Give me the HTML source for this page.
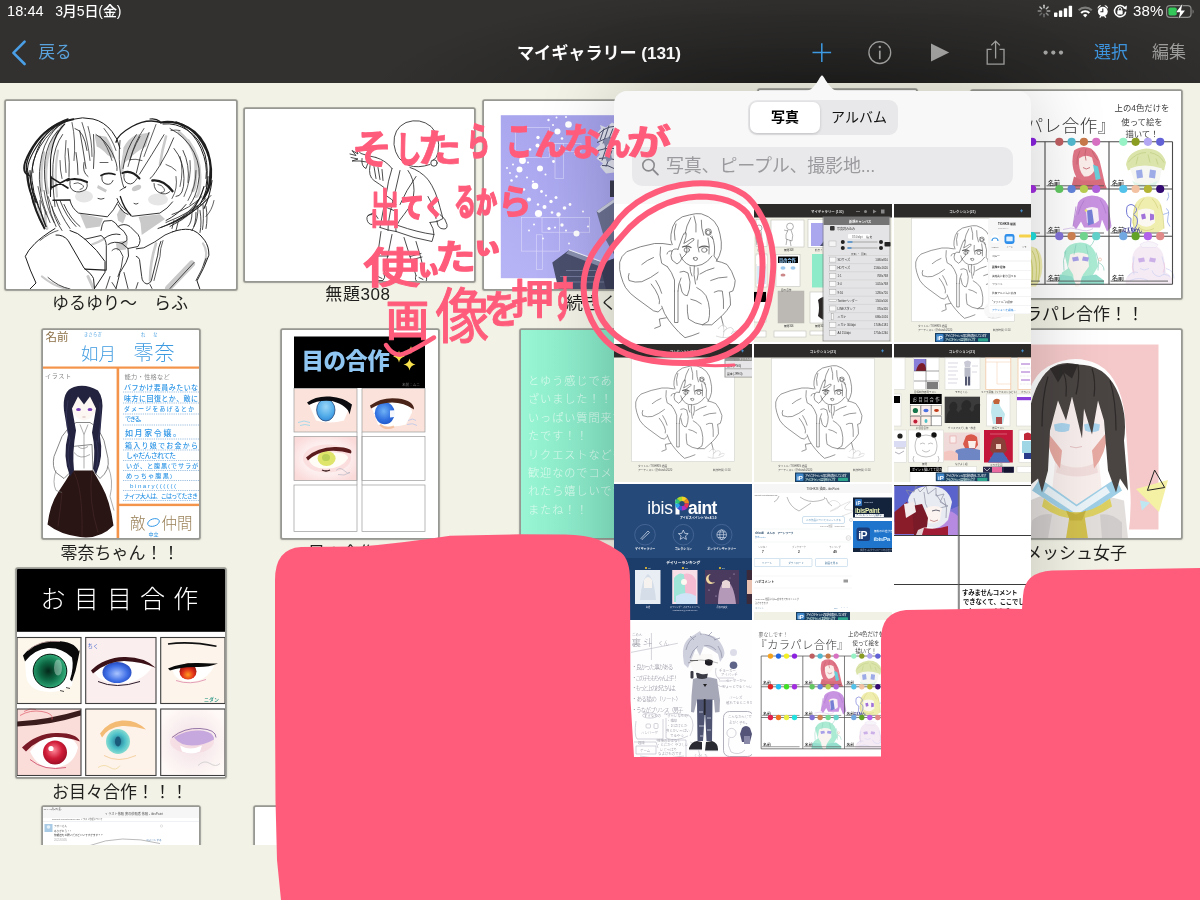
<!DOCTYPE html>
<html lang="ja">
<head>
<meta charset="utf-8">
<title>マイギャラリー (131)</title>
<style>
html,body{margin:0;padding:0}
body{width:1200px;height:900px;overflow:hidden;background:#f2f2e6;position:relative;
  font-family:"Liberation Sans","Noto Sans CJK JP",sans-serif;color:#1d1d1b;-webkit-font-smoothing:antialiased}
svg{display:block;overflow:hidden}
svg text{font-family:"Liberation Sans","Noto Sans CJK JP",sans-serif}
.abs{position:absolute}
.topbar,.gallery,.popover,.ink{will-change:transform}
/* ---------- top bar ---------- */
.topbar{position:absolute;left:0;top:0;width:1200px;height:83px;background:radial-gradient(ellipse 460px 120px at 822px 104px,rgba(0,0,0,.46),rgba(0,0,0,.22) 50%,rgba(0,0,0,0) 100%),#323130;z-index:5}
.status-left{position:absolute;left:7px;top:1px;height:20px;line-height:20px;font-size:14.500px;color:#fff;white-space:pre;letter-spacing:.1px;font-weight:500}
.status-left .d{font-size:14px;letter-spacing:-.1px;margin-left:-1px}
.status-right{position:absolute;right:0;top:0;width:170px;height:24px}
.status-right .pct{position:absolute;left:103px;top:1px;font-size:15px;line-height:20px;color:#fff;letter-spacing:.2px}
.nav{position:absolute;left:0;top:24px;width:1200px;height:59px}
.nav .back{position:absolute;left:38.500px;top:18px;font-size:16.600px;line-height:22px;color:#5aa2dc}
.nav .title{position:absolute;left:0;width:1198px;top:17px;text-align:center;font-size:17.200px;line-height:24px;font-weight:700;color:#fff;letter-spacing:-.1px}
.nav .sel{position:absolute;left:1094px;top:18px;font-size:17px;line-height:22px;color:#3d93dc}
.nav .edit{position:absolute;left:1152px;top:18px;font-size:17px;line-height:22px;color:#9b9b99}
.nav svg{position:absolute;left:0;top:0}
/* ---------- gallery ---------- */
.gallery{position:absolute;left:0;top:83px;width:1200px;height:762px;overflow:hidden;z-index:1}
.thumb{position:absolute;background:#fff;border-radius:.8px;box-shadow:0 0 0 1.700px #989892,0 .5px 1.600px 1.300px rgba(90,90,80,.32);overflow:hidden}
.thumb svg{position:absolute;left:0;top:0}
.label{position:absolute;width:238px;text-align:center;font-size:17px;line-height:22px;color:#1f1f1d;white-space:pre}
/* ---------- popover ---------- */
.popover{position:absolute;left:614px;top:91px;width:417px;height:700px;background:#f8f8f8;border-radius:13px 13px 0 0;z-index:6;
  box-shadow:0 0 80px rgba(0,0,0,.2)}
.popover .arrow{position:absolute;left:186px;top:-16px}
.seg{position:absolute;left:134px;top:9px;width:150px;height:35px;border-radius:9px;background:#e8e8ea}
.seg .on{position:absolute;left:2px;top:2px;width:70px;height:31px;border-radius:7px;background:#fff;box-shadow:0 1px 3px rgba(0,0,0,.18);
  text-align:center;font-size:14px;line-height:31px;font-weight:700;color:#000}
.seg .off{position:absolute;left:74px;top:2px;width:74px;height:31px;text-align:center;font-size:14px;line-height:31px;color:#111}
.search{position:absolute;left:18px;top:56px;width:381px;height:39px;border-radius:10px;background:#e9e9eb}
.search span{position:absolute;left:34px;top:0;font-size:18px;line-height:39px;color:#9b9b9f;white-space:nowrap;font-weight:400;letter-spacing:-.2px}
.search svg{position:absolute;left:8px;top:10px}
.grid{position:absolute;left:0;top:113px;width:417px;height:560px;overflow:hidden;background:#fff}
.cell{position:absolute;width:138px;height:138px;overflow:hidden;background:#f2f2e6}
.cell svg{position:absolute;left:0;top:0}
.cell.r3 svg{top:-1px}
/* ---------- ink overlay ---------- */
.ink{position:absolute;left:0;top:0;z-index:9}
</style>
</head>
<body>
<header class="topbar">
  <div class="status-left">18:44   <span class="d">3月5日(金)</span></div>
  <div class="status-right">
    <svg width="170" height="24" viewBox="1030 0 170 24">
      <!-- activity spinner -->
      <g stroke-width="1.4" stroke-linecap="round" fill="none">
        <path d="M1044 5.2v2.6" stroke="#d8d8d8"/><path d="M1048.1 6.9l-1.8 1.8" stroke="#bdbdbd"/>
        <path d="M1049.8 11h-2.6" stroke="#a5a5a5"/><path d="M1048.1 15.1l-1.8-1.8" stroke="#8d8d8d"/>
        <path d="M1044 16.8v-2.6" stroke="#777"/><path d="M1039.9 15.1l1.8-1.8" stroke="#6a6a6a"/>
        <path d="M1038.2 11h2.6" stroke="#8f8f8f"/><path d="M1039.9 6.9l1.8 1.8" stroke="#c4c4c4"/>
      </g>
      <!-- signal -->
      <g fill="#fff"><rect x="1054" y="12.6" width="3.4" height="4.4" rx=".7"/><rect x="1058.9" y="10.4" width="3.4" height="6.6" rx=".7"/>
      <rect x="1063.8" y="8.2" width="3.4" height="8.8" rx=".7"/><rect x="1068.7" y="5.8" width="3.4" height="11.2" rx=".7"/></g>
      <!-- wifi -->
      <g fill="none" stroke="#fff" stroke-linecap="butt">
        <path d="M1078.6 10.3a9.4 9.4 0 0 1 13.2 0" stroke-width="2.1" stroke="#7d7d7b"/>
        <path d="M1081.1 12.9a5.8 5.8 0 0 1 8.2 0" stroke-width="2.1"/>
      </g>
      <path d="M1085.2 17.4l-2.2-2.3a3.1 3.1 0 0 1 4.4 0z" fill="#fff"/>
      <!-- alarm -->
      <g fill="#fff"><circle cx="1102.8" cy="11.6" r="4.9"/><path d="M1097.6 8.8a3 3 0 0 1 3.6-3.4zM1108 8.8a3 3 0 0 0-3.6-3.4z"/>
      <path d="M1099.2 17.3l1.4-1.8 1 .8-1.4 1.8zM1106.4 17.3l-1.4-1.8-1 .8 1.4 1.8z"/></g>
      <path d="M1102.8 8.6v3.2h-2.4" stroke="#2c2b2a" stroke-width="1.1" fill="none"/>
      <!-- rotation lock -->
      <g fill="none" stroke="#fff" stroke-width="1.5"><path d="M1124.9 8.2a5.6 5.6 0 1 0 .8 3.4"/></g>
      <path d="M1126.9 5.6l-.4 4.2-3.7-1.9z" fill="#fff"/>
      <rect x="1117.3" y="10.2" width="5.4" height="4.3" rx=".9" fill="#fff"/>
      <path d="M1118.4 10.4v-1.2a1.6 1.6 0 0 1 3.2 0v1.2" stroke="#fff" stroke-width="1" fill="none"/>
      <!-- battery -->
      <rect x="1166.6" y="5.6" width="24.4" height="11.8" rx="3.4" fill="none" stroke="#8c8c8a" stroke-width="1.2"/>
      <path d="M1192.6 9.4c1.3.4 1.3 3.8 0 4.2z" fill="#8c8c8a"/>
      <rect x="1168.4" y="7.4" width="8.4" height="8.2" rx="1.8" fill="#34c759"/>
      <path d="M1182.3 4l-6.2 8.2h4l-1.4 6.6 6.3-8.4h-4z" fill="#fff" stroke="#2c2b2a" stroke-width=".9" paint-order="stroke"/>
    </svg>
    <span class="pct">38%</span>
  </div>
  <nav class="nav">
    <svg width="1200" height="59" viewBox="0 24 1200 59">
      <path d="M24.6 41.6L13.4 52.8l11.2 11.2" fill="none" stroke="#4a9fe6" stroke-width="2.6" stroke-linecap="round" stroke-linejoin="round"/>
      <path d="M812.5 52.6h18.6M821.8 43.3v18.6" stroke="#3f9feb" stroke-width="1.5" fill="none"/>
      <circle cx="879.8" cy="52.6" r="10.9" fill="none" stroke="#a3a3a1" stroke-width="1.3"/>
      <path d="M879.8 50.6v8.6" stroke="#a3a3a1" stroke-width="1.7"/><circle cx="879.8" cy="47" r="1.2" fill="#a3a3a1"/>
      <path d="M931 43.6v18l18.2-9z" fill="#a3a3a1"/>
      <path d="M991.6 49.4h-4.4v14.8h16.8v-14.8h-4.4" fill="none" stroke="#a3a3a1" stroke-width="1.3"/>
      <path d="M995.6 58.6V41.4M991.3 45.4l4.3-4.3 4.3 4.3" fill="none" stroke="#a3a3a1" stroke-width="1.3"/>
      <circle cx="1045.6" cy="52.6" r="2.1" fill="#a3a3a1"/><circle cx="1053.3" cy="52.6" r="2.1" fill="#a3a3a1"/><circle cx="1061" cy="52.6" r="2.1" fill="#a3a3a1"/>
    </svg>
    <div class="back">戻る</div>
    <div class="title">マイギャラリー (131)</div>
    <div class="sel">選択</div>
    <div class="edit">編集</div>
  </nav>
</header>
<main class="gallery">
  <!-- coordinates inside .gallery are page-y minus 83 -->
  <div class="thumb" style="left:6px;top:17.5px;width:230px;height:188px"><svg width="230" height="188" viewBox="6 100.500 230 188">
<g fill="#c9c9c9" stroke="none">
  <path d="M94.600 134.200L106.300 136.300Q113 146 115 158.700L107.400 154.500Q102 148 96.700 146z"/>
  <path d="M123.500 147Q128 138 136.300 134.200L150.200 132 146 146Q136 151 128.900 158.700L121.400 165z"/>
  <path d="M79.700 213L103 218 100 226 86 228z"/>
  <path d="M138.500 216.300L159.800 213.700 165 218.500 141.700 234.500 140.600 222.700z"/>
  <path d="M98 184.500l9 5-1.500 2.500-8.500-4.500z"/>
  <ellipse cx="136.500" cy="187.500" rx="5" ry="2.600" transform="rotate(-25 136.500 187.500)"/>
  <path d="M117 214l4-8 5 9-3 8-5-3z"/>
  <path d="M116 243q6-4 12-2l-2 8-9 1z"/>
</g>
<g fill="none" stroke="#cacaca" stroke-linecap="round">
  <path d="M179 132Q196 146 196 166T193 190" stroke-width="3.400"/>
  <path d="M166 136Q162 150 160 164" stroke-width="2.600"/>
  <path d="M44 152Q40 170 42 190" stroke-width="2.600"/>
  <path d="M191.800 263.300L168.300 287.800" stroke-width="6.500"/>
  <path d="M203 243Q209 252 204 264" stroke-width="2.200"/>
  <path d="M156 243Q150 262 150 280" stroke-width="2.600"/>
  <path d="M42 276Q54 286 66 288" stroke-width="2.200"/>
  <path d="M92 244Q98 242 103 239" stroke-width="2.200"/>
  <path d="M88 276L93 287" stroke-width="3"/>
  <path d="M46 212Q44 222 47 228" stroke-width="3"/>
</g>
<g fill="none" stroke="#cdcdcd" stroke-linecap="round">
  <path d="M62 126Q50 140 47 160T48 192" stroke-width="3"/>
  <path d="M58 150Q54 170 57 196" stroke-width="2.200"/>
  <path d="M188 140Q200 156 200 176T196 196" stroke-width="3"/>
  <path d="M126 150Q122 160 122 172" stroke-width="3"/>
  <path d="M196 206Q188 216 176 222" stroke-width="2.600"/>
  <path d="M38 206Q40 218 46 226" stroke-width="2.400"/>
</g>
<g fill="#e4e4e4" stroke="none" opacity=".9">
  <ellipse cx="84" cy="196" rx="9" ry="6"/><ellipse cx="158" cy="199" rx="10" ry="6"/>
</g>
<g fill="none" stroke="#1e1e1e" stroke-linecap="round" stroke-linejoin="round">
  <!-- left girl hair outline -->
  <path d="M73.300 118.700Q47 124 33 146T27 174Q28 186 31.700 195Q34 208 44.500 228" stroke-width="1.900"/>
  <path d="M70 119.500Q49 126 36 147T30 176Q31 190 36 202" stroke-width="1.100"/>
  <path d="M66 121Q50 129 40 146T33 172" stroke-width=".9"/>
  <path d="M73.300 118.700Q82 116 93 118.500T112 131Q118 138 120 148" stroke-width="1"/>
  <path d="M64.700 123.500Q52 136 50.500 160V196" stroke-width="1.100"/>
  <path d="M62.600 134Q54 146 53 164T55 206" stroke-width=".8"/>
  <path d="M58 130Q47 142 45 160T48 200Q50 214 56 226" stroke-width=".8"/>
  <path d="M79.700 130Q83 148 86 168M93.500 134Q95 152 93.500 168M75 128Q84 130 87 150M68 148Q70 162 69 176M76 152Q78 164 78 174M84 162Q82 172 88 176" stroke-width=".8"/>
  <path d="M96 134Q106 140 112 152T117 170" stroke-width=".8"/>
  <path d="M100 162H108" stroke-width=".7"/>
  <!-- hair clip -->
  <path d="M50.900 176.900L67.900 187.500M50.900 187.500L69 178M50.900 176V188.500" stroke-width="1.700"/>
  <path d="M53 199.800L70 199.500" stroke-width="1.400"/>
  <!-- left girl eyes -->
  <path d="M67 180Q76 176.500 87 181.500" stroke-width="2"/>
  <path d="M70 181Q69 188 74 190.500T86 189Q88 186 87 182" stroke-width=".8"/>
  <path d="M74 183Q78 181 82 184T80 189" stroke-width=".7"/>
  <path d="M101 175Q107 171.500 115 174" stroke-width="1.700"/>
  <path d="M102 176Q101 182 106 183.500T113 180" stroke-width=".8"/>
  <path d="M98 198Q101 199.500 104 198" stroke-width=".8"/>
  <!-- left girl jaw -->
  <path d="M70 200Q72 208 78.600 212.600L107.400 216.300Q114 210 118 201.400" stroke-width=".9"/>
  <!-- lower hair left -->
  <path d="M56 200Q60 214 70 228M60 200Q66 216 76 226M64 204Q70 218 80 226M52 206Q54 218 62 230M40 200Q40 214 46 226M34 198Q36 212 42 224" stroke-width=".8"/>
  <!-- left shoulder / sleeve -->
  <path d="M55 228Q42 236 34.900 243T25.300 255.800Q30 270 36 282.500L29.500 289" stroke-width="1"/>
  <path d="M40 240Q50 232 58 230" stroke-width=".7"/>
  <path d="M56 234.500Q63 234 68 239.800L84 267.500Q92 274 93.500 278L94.600 289" stroke-width="1"/>
  <path d="M70 230Q78 232 85 238.700Q98 250 105 261V271.800L94.600 287.800" stroke-width="1"/>
  <path d="M85 238.700L101 235Q106 238 106.300 245V269.700" stroke-width=".9"/>
  <path d="M85 268.600L105.300 269.700" stroke-width="1.200"/>
  <path d="M48 277Q58 286 70 288.500" stroke-width=".8"/>
  <!-- hands -->
  <path d="M101 230Q102 223 104 220.600L111.700 220Q116 222 118 226L124 231Q128 236 127 240L122 243" stroke-width=".9"/>
  <path d="M104 238Q112 232 120 234M108 244Q114 240 122 243L128 248Q130 256 126 262L120 272Q118 280 116 288" stroke-width=".9"/>
  <path d="M112 250Q116 246 120 250L123 256Q122 268 118 276" stroke-width=".8"/>
  <path d="M118 226Q124 222 130 226L138 234Q142 240 138 246L128 248" stroke-width=".9"/>
  <path d="M110 276L106 288M124 272L128 288M112 282L116 288" stroke-width=".8"/>
  <!-- right girl hair outline -->
  <path d="M160.900 122Q147 117.500 132 126T116 141.700" stroke-width="1.400"/>
  <path d="M160.900 122Q174 119.500 188 127T208 152Q213 168 210 184.300Q208 192 203.500 198" stroke-width="2.100"/>
  <path d="M163 123.500Q176 122 188 130T205 154Q209 170 206 186" stroke-width="1"/>
  <path d="M150 118.500Q156 117.500 160 121" stroke-width="1.200"/>
  <path d="M164 134.200Q152 154 139.500 173.700M173.700 137.400Q168 152 159.800 165T150.200 178M149 132Q140 152 136.300 172.600M136.300 134.200Q126 148 123 168" stroke-width=".8"/>
  <path d="M171 130Q176 129 180 130M166 164Q172 166 176 170M130 159Q136 158 142 160" stroke-width=".7"/>
  <path d="M174 148Q184 160 184 178T176 196M183 150Q190 164 188 182" stroke-width=".8"/>
  <path d="M120 140Q118 160 121 176T126 186L120 190" stroke-width=".8"/>
  <!-- right girl eyes -->
  <path d="M122.500 172.600Q131 168.500 139.500 178" stroke-width="2"/>
  <path d="M124 174Q123 181 128 183T137 178" stroke-width=".8"/>
  <path d="M152.300 180Q163 178.500 172.600 190.700" stroke-width="2.300"/>
  <path d="M154 183Q154 190 160 192.500T170 191" stroke-width=".8"/>
  <path d="M158 184Q162 184 164 188T161 192" stroke-width=".7"/>
  <path d="M134 203Q136 204.500 138 203" stroke-width=".8"/>
  <!-- jaws -->
  <path d="M120.300 196Q124 208 131 215" stroke-width="1.300"/>
  <path d="M132 215.800L159.800 212.600Q168 208 172.600 201.400" stroke-width=".9"/>
  <path d="M117 198Q120 206 126 210M118 204Q122 212 128 214" stroke-width=".9"/>
  <!-- lower right hair -->
  <path d="M211 195Q196 214 160.900 227M206 198Q192 212 166 222M202 196Q190 208 172 214M198 200Q188 214 176 220M203 204Q204 220 202.500 229M198 206Q198 220 194 226M192 212Q192 222 188 226M174 220L172 228M178 222L176 230" stroke-width=".8"/>
  <path d="M214 200Q212 210 206 216" stroke-width=".7"/>
  <!-- right shoulder -->
  <path d="M172.600 231.300Q182 228 189.700 229T204.600 239.800Q209 246 208.900 254.700Q204 268 197 280.300L200 289" stroke-width="1"/>
  <path d="M136.300 248.300L143.800 247.300Q155 242 165 234.500L172.600 231.300" stroke-width=".9"/>
  <path d="M160.900 240.900Q158 247 157.700 254.700L151.300 280.300Q150 283 147 283.500Q142 282 141.700 276L139.500 259Q138 256 136.300 255.800" stroke-width=".9"/>
  <path d="M163 240Q160 248 160 256L154 280" stroke-width=".7"/>
  <path d="M194 262L170 288M206 258Q202 270 196 280" stroke-width=".8"/>
  <path d="M138 282L136 288M150 284L152 288" stroke-width=".8"/>
</g>
<g fill="none" stroke="#1e1e1e" stroke-linecap="round" stroke-linejoin="round">
  <path d="M68 118.500Q46 126 34 146T28.500 175" stroke-width="1.400"/>
  <path d="M64 120Q44 130 37 150T32 180Q33 192 38 204" stroke-width="1"/>
  <path d="M60 124Q46 136 42 154T40 186Q42 204 50 222" stroke-width=".8"/>
  <path d="M30 170Q30 186 36 200T46 226M28 176Q30 192 34 204" stroke-width="1.200"/>
  <path d="M44 190Q46 206 54 222M48 196Q52 210 60 224M38 186Q40 200 46 214" stroke-width=".7"/>
  <path d="M72 122Q76 140 74 160M82 122Q88 140 90 160M88 126Q92 140 92 156M66 140Q64 156 66 172M60 160Q60 170 62 178" stroke-width=".7"/>
  <path d="M104 128Q112 138 116 150M100 136Q108 146 112 160" stroke-width=".7"/>
  <path d="M176 121.500Q192 126 202 142T210 172Q210 186 205 196" stroke-width="1.500"/>
  <path d="M180 124Q194 132 201 148T206 178" stroke-width="1"/>
  <path d="M170 128Q186 136 194 152T198 184Q196 196 190 204" stroke-width=".8"/>
  <path d="M208 176Q208 190 200 204M212 180Q210 196 204 208M204 186Q200 200 192 210" stroke-width="1.100"/>
  <path d="M196 170Q196 186 188 200M190 160Q192 178 184 196M180 156Q184 170 180 186M176 176Q178 188 172 198" stroke-width=".7"/>
  <path d="M208 198Q190 218 158 228M200 204Q186 216 168 224M194 210Q182 220 170 226M186 204Q178 214 166 220" stroke-width=".9"/>
  <path d="M144 128Q134 142 130 160M156 124Q150 140 144 156M140 136Q132 150 128 166" stroke-width=".7"/>
  <path d="M200 210Q202 222 200 232M196 212Q196 224 192 230M206 206Q208 218 206 228" stroke-width=".8"/>
</g>
</svg></div>
  <div class="label" style="left:1px;top:210px">ゆるゆり〜　らふ</div>

  <div class="thumb" style="left:245px;top:25.5px;width:229px;height:172px"><svg width="229" height="172" viewBox="245 108.500 229 172">
<g fill="none" stroke="#2a2a2a" stroke-width=".85" stroke-linecap="round" stroke-linejoin="round">
  <path d="M409 165Q396 160 394 144Q393 128 406 122Q420 117 431 126Q441 136 438 152Q437 158 433 160"/>
  <circle cx="434" cy="162.500" r="3.200"/>
  <path d="M409 165Q418 168 430 164"/>
  <!-- left arm + hand -->
  <path d="M350 153.500L356 155 352 150 358 153.500 356 148.500 361 153Q366 155 376 157M351 157L358 158.500 352 160.500H360Q368 161 374 164"/>
  <path d="M362 158Q361 166 366 168Q369 163 367 158"/>
  <path d="M376 157Q386 160 392 168M370 165Q368 176 374 180T384 187M374 166L376 178M378 167L380 179M382 169L383 180"/>
  <!-- coat -->
  <path d="M410 167Q420 170 428 179Q436 190 440 207L443 218Q438 222 430 222"/>
  <path d="M392 168Q388 180 386 195L380 227M400 170Q396 188 392 204T388 230M408 170Q414 178 414 190T404 214 396 231"/>
  <path d="M416 176Q406 190 400 204"/>
  <path d="M396 231Q414 238 432 241L434 234Q418 232 398 225"/>
  <path d="M380 227Q388 230 396 231M430 222Q434 228 434 234M428 196Q434 206 436 218"/>
  <path d="M386 195Q392 198 396 204M384 206L394 210"/>
  <!-- hands -->
  <path d="M440 214Q446 218 447 224T441 228Q437 226 437 220"/>
  <path d="M372 214Q366 214 367 219T372 224M368 215L374 212 378 218"/>
  <!-- legs -->
  <path d="M381 231L378 252 376 271M392 234L388 254 384 273M404 237L410 256 416 275M416 241L421 258 424 271"/>
  <path d="M377 252H389M377 255.500H388.500M410 256L421 253M411 259.500L422 256.500"/>
  <path d="M376 271Q371 276 374 280H383Q386 277 384 273M416 275Q414 280 418 281.500H426Q428 276 424 271M378 276L382 278M419 277L423 279"/>
</g>
</svg></div>
  <div class="label" style="left:239px;top:201px;letter-spacing:.6px">無題308</div>

  <div class="thumb" style="left:484px;top:17.5px;width:229px;height:188px"><svg width="229" height="188" viewBox="484 100.500 229 188">
<defs><linearGradient id="t3g" x1="0" y1="1" x2="1" y2="0"><stop offset="0" stop-color="#b7b4f6"/><stop offset=".5" stop-color="#aaa7ef"/><stop offset="1" stop-color="#9f9ce6"/></linearGradient></defs>
<rect x="500.800" y="114.700" width="196" height="163" fill="url(#t3g)"/>
<g fill="none" stroke="#e3e2fb" stroke-width=".6" opacity=".85">
  <rect x="515.600" y="127" width="34" height="29.800"/><rect x="555" y="143" width="8.700" height="35"/>
  <rect x="521.400" y="217" width="37.900" height="33.600"/><rect x="542" y="217" width="47.700" height="14.700"/>
  <rect x="536.600" y="234.300" width="6.100" height="34.700"/><rect x="549" y="143" width="32" height="8"/>
</g>
<g fill="#fff">
  <circle cx="568.500" cy="124" r="3.300"/><circle cx="557.500" cy="131" r="3"/><circle cx="548.500" cy="119.500" r="1.200"/><circle cx="556.500" cy="117" r="1"/>
  <circle cx="566" cy="116.500" r="1"/><circle cx="538" cy="137" r="1.700"/><circle cx="537.500" cy="145" r="2"/><circle cx="530" cy="149" r="1.300"/>
  <circle cx="522.500" cy="160" r="3.400"/><circle cx="540" cy="168" r="3"/><circle cx="519.500" cy="169" r="3"/><circle cx="528" cy="162" r="1"/>
  <circle cx="513" cy="164" r="1"/><circle cx="507" cy="167.500" r="1"/><circle cx="510" cy="172.500" r=".9"/><circle cx="516.500" cy="176" r="1.200"/>
  <circle cx="511.500" cy="180" r="1.300"/><circle cx="527" cy="177" r="1"/><circle cx="533" cy="181" r="1.100"/><circle cx="535" cy="185.500" r="3.300"/>
  <circle cx="524" cy="189" r="1.200"/><circle cx="515" cy="190" r="1"/><circle cx="541.500" cy="191" r="1.400"/><circle cx="546" cy="195" r="1"/>
  <circle cx="529" cy="199" r="2"/><circle cx="538" cy="204" r="1.200"/><circle cx="544.500" cy="206.500" r="2"/><circle cx="551" cy="201" r="1.700"/>
  <circle cx="556" cy="197" r="1.500"/><circle cx="538.500" cy="213" r="3.600"/><circle cx="552" cy="212" r="1.300"/><circle cx="558.500" cy="214" r="2.200"/>
  <circle cx="564.500" cy="207.500" r="1.800"/><circle cx="570" cy="204" r="1.400"/><circle cx="583" cy="211" r="1"/><circle cx="562" cy="224.500" r="1.700"/>
  <circle cx="549" cy="228" r="1.600"/><circle cx="555" cy="227" r="1"/><circle cx="534" cy="224" r="1"/><circle cx="529" cy="230" r=".9"/>
  <circle cx="566" cy="230" r="1"/><circle cx="576.500" cy="233" r="3"/><circle cx="588" cy="226" r="1"/><circle cx="569" cy="243" r=".9"/>
  <circle cx="543" cy="238" r=".9"/><circle cx="553" cy="124.500" r="1"/><circle cx="562" cy="138" r="1.300"/><circle cx="573" cy="142" r="1.200"/>
  <circle cx="575.500" cy="153" r="1.300"/><circle cx="553.500" cy="161" r="1.400"/><circle cx="545.500" cy="174" r="1"/><circle cx="560" cy="148" r="1"/>
</g>
<!-- character -->
<path d="M596.500 210.700L614 198.400V254L603.700 235.400z" fill="#6b7192"/>
<path d="M596.500 210.700L614 198.400V202L599 212.500z" fill="#c9cde0"/>
<path d="M610 180h6v16.500h-6z" fill="#3a3c50"/>
<path d="M552.300 262L568.800 249.800 601.700 262 618 257V289H558.500z" fill="#4a4f6c"/>
<path d="M568.800 249.800L601.700 262 614 258.500V262L600 266 566 253z" fill="#8890ae"/>
<path d="M568.800 249.300L601.700 261.300" stroke="#eef0f8" stroke-width="1.200" fill="none"/>
<path d="M560 276h40M562 281.500h46M566 270h30" stroke="#767d9e" stroke-width=".9" fill="none"/>
<path d="M600 264l6 25h10v-32z" fill="#3a3e58"/>
<g>
  <path d="M596 134L601 128 600 124.500 606 127 612 122 614 123V172L606 173 600 166 603 163 596.500 158 600 154 595.500 148 600 144z" fill="#dfe1ee"/>
  <path d="M598 134q8-8 16-8M597 142q8-5 17-5M598 150q8-3 16-2M599 158q8-2 15 1M602 165q6-1 12 3M604 128l-4 12M609 125l-6 18M613 128l-8 20M606 148l-4 12M612 150l-6 16" stroke="#4e526e" stroke-width="1" fill="none"/>
  <path d="M603 140l6-4 2 6-6 4zM605 156l6-3 1 6-5 3z" fill="#8d92b4"/>
</g>
</svg></div>
  <div class="label" style="left:566px;top:210px;width:auto;text-align:left">続きく</div>

  <div class="thumb" style="left:759px;top:6.800px;width:157px;height:208px"></div>
  <div class="thumb" style="left:972px;top:7.500px;width:209px;height:207px"><svg width="209" height="207" viewBox="972 90.500 209 207">
<rect x="970" y="89" width="212" height="212" fill="#fff"/>
<text x="977" y="111" font-size="7.500" fill="#333" font-weight="300">裏なしです！</text>
<text x="972" y="131" font-size="17.500" fill="#3a3a3a" font-weight="300" letter-spacing=".5">『カラパレ合作』</text>
<g font-size="8.400" fill="#3a3a3a" font-weight="400" text-anchor="middle"><text x="1142" y="110.500">上の4色だけを</text><text x="1142" y="124.500">使って絵を</text><text x="1142" y="136">描いて！</text></g>
<g opacity=".8"><path d="M1074 150q8-6 17-2 8 6 10 18l5 22h-34l4-12q-6-12-2-26z" fill="#d9546a"/><path d="M1079 158q6-5 13-1l3 12q-4 8-11 7-6-6-5-18z" fill="#fbe9e4"/><path d="M1093 164l5 2 3 14-5 1z" fill="#45c3cf"/><path d="M1074 176l8 4h12l8-2 5 10h-36z" fill="#cf4a5c"/><path d="M1080 150q-4 8-3 14M1086 148q-2 6 0 12M1092 150q2 6 6 10M1083 167q3 3 7 0" stroke="#b23a4a" stroke-width=".8" fill="none"/></g>
<g opacity=".75"><path d="M1126 164q2-14 20-16 16 0 20 14l-2 8q-18-8-36 0z" fill="#cfdc8e"/><path d="M1130 168q14-6 32 0l-3 14q-12 8-24 0z" fill="#f3f5ee"/><path d="M1136 170l6-1 1 8-6 1zM1150 169l6 1-1 8-6-1z" fill="#7d8fe0"/><path d="M1132 180q12 8 26 0l-4 8h-18z" fill="#d6f2e3"/><path d="M1128 162q8-10 18-10M1150 152q10 2 14 10M1138 156l-2 8M1148 154l2 8M1156 158l2 6" stroke="#a9bd5a" stroke-width=".7" fill="none"/></g>
<g opacity=".75"><path d="M1078 202q4-6 14-7 12 0 16 10l3 22-4 4-5-12-2 8h-16l-3-6-5 8-3-4z" fill="#b66fd6"/><path d="M1086 208q6-3 12 0l1 12q-6 6-12 2z" fill="#f6ecf4"/><path d="M1087 210l5-1 2 14-6 2z" fill="#4a55c8"/><path d="M1076 206l-3 20M1108 206l3 20M1084 200q-4 6-6 14M1100 199q4 6 6 14" stroke="#9550bf" stroke-width=".8" fill="none"/><path d="M1063 229q8-3 16 0t14-1" stroke="#c9a8e2" stroke-width=".8" fill="none"/><circle cx="1086" cy="210" r="1.300" fill="#e8e04a"/></g>
<g opacity=".8"><path d="M1134 206q4-10 14-10 12 0 14 12l2 20-6 4h-22l-4-10z" fill="#ecea9c"/><path d="M1138 210q8-4 16 0l1 12q-8 8-17 1z" fill="#fbf6ee"/><path d="M1141 214l4-1 1 5-4 1zM1150 213l4 1v5l-4 1z" fill="#8a4fd0"/><path d="M1127 206q4-4 8 0t-2 8q6 2 4 10l-4 8q-4-6-2-14-6-2-4-12z" fill="none" stroke="#4f57c9" stroke-width="1"/><path d="M1136 204q-4 10-2 24M1160 204q4 10 4 24M1144 198q-4 4-6 10M1152 198q4 4 6 10M1140 228q6 4 14 0" stroke="#c9c45a" stroke-width=".7" fill="none"/><path d="M1167 200q3-4 1-8M1166 208q4 2 2 8t2 10M1163 214l6-2" stroke="#6a86d8" stroke-width=".7" fill="none"/></g>
<g opacity=".75"><path d="M1064 252q4-10 16-10 12 0 16 12l2 12-6 10 10 6v-2H1060l2-8 6-4z" fill="#8fe5c5"/><path d="M1070 254q8-4 18 0l1 12-6 8-4 12h-4l-2-12-5-8z" fill="#f7f1ec"/><path d="M1072 257l6-1 1 4-6 1zM1083 256l6 1-1 4-6-1z" fill="#8a7fe0"/><path d="M1060 274l12 2 4 8h-18zM1082 276l14-2 8 6v4h-24z" fill="#6fd4bd"/><path d="M1066 250q-4 10-2 20M1096 252q4 8 2 18M1076 244l-2 10M1086 244l2 10M1090 246q6-6 4-12M1098 262q6 2 6 8" stroke="#5fbfa6" stroke-width=".7" fill="none"/><circle cx="1100" cy="259" r="1.500" fill="none" stroke="#e69a7a" stroke-width=".6"/></g>
<g opacity=".9"><path d="M1132 258q2-14 16-14 14 0 16 14l2 14q8 4 6 12h-46q-2-8 6-12z" fill="#f4e9f4"/><path d="M1140 244q8-6 18 0l-2 3h-14z" fill="#f7f4fa" stroke="#e7d9ee" stroke-width=".6"/><path d="M1138 258l6-1 1 4-6 1zM1150 257l6 1-1 4-6-1z" fill="#c6a8e6"/><path d="M1134 256q-2 10 0 18M1162 256q4 10 2 18M1128 276q4-6 10-4M1166 268q8 2 8 10M1160 276q4-4 10 0M1130 280q10-4 18 0M1152 270q2 6 8 6M1140 268q4 3 9 0" stroke="#c9cdf0" stroke-width=".7" fill="none"/><path d="M1133 262q-2 6 1 10M1164 262q2 6-1 10" stroke="#f0c6dc" stroke-width=".8" fill="none"/></g>
<g><path d="M1030 246q10 0 12 14t-6 26h-8z" fill="#f1efb2"/><path d="M1032 250q6 8 4 30M1036 248q6 12 2 34M1030 256q4 10 2 26" stroke="#c8cc5c" stroke-width=".7" fill="none"/></g>
<g stroke="#4a4a4a" stroke-width="1.100" fill="none">
<path d="M981 141.3H1172.5"/>
<path d="M981 188.5H1172.5"/>
<path d="M981 235.7H1172.5"/>
<path d="M981 283.8H1172.5"/>
<path d="M981 141.3V283.8"/>
<path d="M1045 141.3V283.8"/>
<path d="M1109 141.3V283.8"/>
<path d="M1172.5 141.3V283.8"/>
</g>
<g font-size="6" fill="#222" font-weight="500">
<text x="984" y="184.3">名前</text>
<text x="1048" y="184.3">名前</text>
<text x="1112" y="184.3">名前</text>
<text x="984" y="231.5">名前</text>
<text x="1048" y="231.5">名前</text>
<text x="1112" y="231.5">名前</text>
<text x="984" y="279.6">名前</text>
<text x="1048" y="279.6">名前</text>
<text x="1112" y="279.6">名前</text>
</g><g stroke="#555" stroke-width=".9">
<path d="M982.5 185.3H1040"/>
<path d="M1046.5 185.3H1104"/>
<path d="M1110.5 185.3H1168"/>
<path d="M982.5 232.5H1040"/>
<path d="M1046.5 232.5H1104"/>
<path d="M1110.5 232.5H1168"/>
<path d="M982.5 280.6H1040"/>
<path d="M1046.5 280.6H1104"/>
<path d="M1110.5 280.6H1168"/>
</g>
<text x="1112" y="231.500" font-size="5.500" fill="#3a3a8a" font-weight="500" textLength="30">　　　よぴいちゃん</text>
<circle cx="995.3" cy="141.3" r="4.100" fill="#f5a21e"/>
<circle cx="1007.6" cy="141.3" r="4.100" fill="#2468e2"/>
<circle cx="1019.9" cy="141.3" r="4.100" fill="#f2f024"/>
<circle cx="1032.2" cy="141.3" r="4.100" fill="#8a22e0"/>
<circle cx="1059.3" cy="141.3" r="4.100" fill="#c05f62"/>
<circle cx="1071.6" cy="141.3" r="4.100" fill="#52b9cf"/>
<circle cx="1083.9" cy="141.3" r="4.100" fill="#c97a4b"/>
<circle cx="1096.2" cy="141.3" r="4.100" fill="#d871c2"/>
<circle cx="1123.3" cy="141.3" r="4.100" fill="#97f2c6"/>
<circle cx="1135.6" cy="141.3" r="4.100" fill="#8a9c22"/>
<circle cx="1147.9" cy="141.3" r="4.100" fill="#b3a6f2"/>
<circle cx="1160.2" cy="141.3" r="4.100" fill="#6262d6"/>
<circle cx="995.3" cy="188.5" r="4.100" fill="#e22424"/>
<circle cx="1007.6" cy="188.5" r="4.100" fill="#22c0f2"/>
<circle cx="1019.9" cy="188.5" r="4.100" fill="#42e024"/>
<circle cx="1032.2" cy="188.5" r="4.100" fill="#a22ee0"/>
<circle cx="1059.3" cy="188.5" r="4.100" fill="#62c862"/>
<circle cx="1071.6" cy="188.5" r="4.100" fill="#6284da"/>
<circle cx="1083.9" cy="188.5" r="4.100" fill="#b9d052"/>
<circle cx="1096.2" cy="188.5" r="4.100" fill="#b062d8"/>
<circle cx="1123.3" cy="188.5" r="4.100" fill="#52c2ea"/>
<circle cx="1135.6" cy="188.5" r="4.100" fill="#f2c2a2"/>
<circle cx="1147.9" cy="188.5" r="4.100" fill="#b4b434"/>
<circle cx="1160.2" cy="188.5" r="4.100" fill="#320a72"/>
<circle cx="995.3" cy="235.7" r="4.100" fill="#e2224e"/>
<circle cx="1007.6" cy="235.7" r="4.100" fill="#f27222"/>
<circle cx="1019.9" cy="235.7" r="4.100" fill="#e9f042"/>
<circle cx="1032.2" cy="235.7" r="4.100" fill="#22e2e0"/>
<circle cx="1059.3" cy="235.7" r="4.100" fill="#8272d8"/>
<circle cx="1071.6" cy="235.7" r="4.100" fill="#d08252"/>
<circle cx="1083.9" cy="235.7" r="4.100" fill="#72d892"/>
<circle cx="1096.2" cy="235.7" r="4.100" fill="#62d2ca"/>
<circle cx="1123.3" cy="235.7" r="4.100" fill="#72a8e2"/>
<circle cx="1135.6" cy="235.7" r="4.100" fill="#62a224"/>
<circle cx="1147.9" cy="235.7" r="4.100" fill="#b262ea"/>
<circle cx="1160.2" cy="235.7" r="4.100" fill="#e28a8a"/>
</svg></div>
  <div class="label" style="left:957px;top:221px">カラパレ合作！！</div>

  <div class="thumb" style="left:43px;top:246.5px;width:156px;height:208px"><svg width="156" height="208" viewBox="43 329.500 156 208">
<g font-weight="400">
<text x="45.500" y="340.500" font-size="11.500" fill="#8b6f45">名前</text>
<text x="84" y="335.500" font-size="4.200" fill="#3f9be0" letter-spacing=".3">きさらぎ</text>
<text x="141" y="335" font-size="4.200" fill="#3f9be0" letter-spacing="8">れな</text>
<text x="81" y="359" font-size="17.500" fill="#3f9be0" font-weight="300">如月</text>
<text x="133.500" y="359" font-size="20" fill="#3f9be0" font-weight="300" letter-spacing="1">零奈</text>
<text x="45" y="377.500" font-size="6.200" fill="#8a8a8a" letter-spacing=".5">イラスト</text>
<text x="124.500" y="378.500" font-size="6.200" fill="#8a8a8a" letter-spacing=".3">能力・性格など</text>
</g>
<g fill="#f4934a"><rect x="43" y="366" width="156" height="2.200"/><rect x="116.600" y="367" width="2.600" height="171"/><rect x="118" y="503.200" width="81" height="2.400"/></g>
<g font-size="7" fill="#2f96e6" font-weight="500" letter-spacing="-.1">
<text x="124" y="389" textLength="74">バフかけ要員みたいな</text>
<text x="124" y="400.500" textLength="74">味方に回復とか、敵に</text>
<text x="124" y="410" font-size="5.800" textLength="70">ダメージをあげるとか</text>
<text x="125" y="420.500" font-size="6" textLength="20">できる。</text>
<text x="125" y="435" font-size="8" textLength="56">如月家令嬢。</text>
<text x="125" y="447" textLength="73">箱入り娘でお金から</text>
<text x="126" y="457" textLength="50">しゃだんされてた</text>
<text x="126" y="467.500" font-size="6.200" textLength="72">いが、と腹黒(でサラが</text>
<text x="126" y="477" font-size="6.200" textLength="46">めっちゃ腹黒)</text>
<text x="130" y="487" font-size="6.200" textLength="46">binary((((((</text>
<text x="124" y="497" font-size="6" textLength="74">ナイフ大人は、こはってたさき</text>
</g>
<g stroke="#3b7fc0" stroke-width=".5" stroke-dasharray="1.200 1" fill="none">
<path d="M123 391.500h76M123 402.500h76M123 413.500h76M123 424.500h76M123 438.500h76M123 449.500h76M123 460h76M123 470h76M123 480h76M123 490h76M123 500h76"/>
</g>
<g font-weight="300"><text x="130" y="528" font-size="15.500" fill="#9b8259">敵</text><text x="161.500" y="528" font-size="15.500" fill="#9b8259">仲間</text>
<text x="148.500" y="535.500" font-size="5" fill="#2f96e6" font-weight="500">中立</text></g>
<ellipse cx="153.500" cy="522" rx="6" ry="3.600" fill="none" stroke="#2f96e6" stroke-width=".9" transform="rotate(-18 153.500 522)"/>
<!-- character -->
<g>
 <path d="M72 470Q66 480 58 492T47.500 524Q60 534 80 536.500T113.500 525Q110 500 102 486L93 470z" fill="#2a1515"/>
 <path d="M73 470q10 16 9 66M92 470q-4 30 6 62M62 492q-2 20-4 34" stroke="#4a2a2a" stroke-width=".6" fill="none"/>
 <path d="M76 422Q68 426 62 436L54 456Q52 466 56 472L64 478 72 470V446L92 444 93 470 100 478Q110 470 108 458L104 440Q98 426 90 422z" fill="#fff" stroke="#555" stroke-width=".7"/>
 <path d="M56 470q-4 12 0 20l6 2M108 466q6 14 2 30l4 14" stroke="#777" stroke-width=".6" fill="none"/>
 <path d="M80 424l4 10 4-10M84 434v34M78 446q4 4 10 0M74 452q6 8 16 2" stroke="#777" stroke-width=".6" fill="none"/>
 <path d="M72 398q0-8 12-8t12 8v10q-2 10-12 12-10-2-12-12z" fill="#fdf7f4"/>
 <path d="M64 410Q62 390 74 386.500T98 390Q104 398 102 412L100 436Q104 456 96 474L93 468Q96 450 92 432L96 408 90 396 84 404 78 396 72 408 76 430Q72 452 74 470L70 476Q62 456 68 434z" fill="#23233f"/>
 <path d="M68 400q-4 20 2 40M100 402q2 20-2 40M70 440q-4 14 0 28M96 440q4 14 0 28" stroke="#3d3d66" stroke-width=".6" fill="none"/>
 <ellipse cx="78.500" cy="409" rx="2.400" ry="1.500" fill="#7b3fb8"/><ellipse cx="90" cy="409" rx="2.400" ry="1.500" fill="#7b3fb8"/>
 <path d="M82.500 416.500h3" stroke="#a77" stroke-width=".5"/>
</g>
</svg></div>
  <div class="label" style="left:1px;top:460px">零奈ちゃん！！</div>

  <div class="thumb" style="left:282px;top:246.5px;width:156px;height:208px"><svg width="156" height="208" viewBox="282 329.500 156 208">
<defs>
<radialGradient id="t7b1" cx=".5" cy=".35" r=".7"><stop offset="0" stop-color="#9bd6f7"/><stop offset=".6" stop-color="#55aeea"/><stop offset="1" stop-color="#2f86d6"/></radialGradient>
<radialGradient id="t7b2" cx=".45" cy=".4" r=".7"><stop offset="0" stop-color="#6fb2f5"/><stop offset=".6" stop-color="#2f6fe0"/><stop offset="1" stop-color="#1d4fc0"/></radialGradient>
<radialGradient id="t7p" cx=".5" cy=".5" r=".6"><stop offset="0" stop-color="#fff"/><stop offset=".6" stop-color="#fdeeee"/><stop offset="1" stop-color="#fbdada"/></radialGradient>
</defs>
<rect x="294" y="336" width="131" height="51.500" fill="#000"/>
<text x="301.500" y="368.500" font-size="22.500" font-weight="900" fill="#8fc5f1" letter-spacing="-.6">目の合作</text>
<g fill="#f6e04c"><path d="M399 350q.8 5 6 6-5.200 1-6 6-.8-5-6-6 5.200-1 6-6z"/><path d="M409.500 358q.8 5 6 6-5.200 1-6 6-.8-5-6-6 5.200-1 6-6z"/><path d="M411 345.500q.5 3.200 4 4-3.500.8-4 4-.5-3.200-4-4 3.500-.8 4-4z"/></g>
<text x="402" y="385" font-size="3.600" fill="#777">名前：ムニ</text>
<!-- cells -->
<rect x="294" y="388" width="63" height="43.500" fill="#fbe3db"/>
<rect x="362" y="388" width="63" height="43.500" fill="#fbe3db"/>
<rect x="294" y="436" width="63" height="44" fill="url(#t7p)"/>
<g fill="none" stroke="#9a9a9a" stroke-width=".7">
<rect x="294" y="388" width="63" height="43.500"/><rect x="362" y="388" width="63" height="43.500"/>
<rect x="294" y="436" width="63" height="44"/><rect x="362" y="436" width="63" height="44"/>
<rect x="294" y="484.500" width="63" height="46.500"/><rect x="362" y="484.500" width="63" height="46.500"/>
<path d="M357 431.500V484.500M362 431.500V484.500"/>
</g>
<!-- eye 1 -->
<path d="M309 404Q318 398 332 399T350 406L344 420Q330 424 316 420z" fill="#fff"/>
<ellipse cx="325.800" cy="409.500" rx="9.200" ry="11" fill="url(#t7b1)" stroke="#1b3a6a" stroke-width=".7"/>
<path d="M307 402Q316 395 330 396T352 404L349.500 414Q348 405 332 400.500 318 399 309 404.500z" fill="#0b0b0f"/>
<path d="M298 422q6-3 12 0M300 425q5-2 10 0" stroke="#a9d8ea" stroke-width="1" fill="none"/>
<!-- eye 2 -->
<path d="M372 408Q384 400 398 402T412 412L406 424Q392 428 378 424z" fill="#fff"/>
<ellipse cx="384.800" cy="412.800" rx="10" ry="11" fill="url(#t7b2)"/>
<path d="M370 405Q382 396 398 398T414 409Q404 402 392 402 380 402 371 408z" fill="#4a2418"/>
<path d="M390 410l18-1 2 6-20 2z" fill="#fff" opacity=".95"/>
<path d="M380 424q6 6 14 2" stroke="#f0b48a" stroke-width="2" fill="none" opacity=".7"/>
<path d="M408 420q5-3 8 0M407 424q6-2 10 1" stroke="#b9c4e8" stroke-width=".8" fill="none"/>
<!-- eye 3 -->
<ellipse cx="327" cy="458" rx="24" ry="14" fill="#f9cfd0" opacity=".55"/>
<path d="M309 458Q320 452 334 452T348 458Q342 468 326 468T309 458z" fill="#fffdf6"/>
<ellipse cx="326.600" cy="458" rx="9" ry="7.500" fill="#dfe46a"/><ellipse cx="326" cy="457" rx="4" ry="3.500" fill="#b9cf58"/>
<path d="M306 457Q318 446 336 446.500T351 453Q340 449.500 328 450.500 316 452 308 460z" fill="#5a1c1c"/>
<path d="M322 469.500q4 2 8 0" stroke="#3a1a1a" stroke-width="1.300" fill="none"/>
<path d="M336 470q4-4 8 0t6 2M338 474q6 2 12-2" stroke="#b8b8c4" stroke-width=".7" fill="none"/>
</svg></div>
  <div class="label" style="left:308px;top:460px;width:auto;text-align:left">目の合作</div>

  <div class="thumb" style="left:521px;top:246.5px;width:156px;height:208px;background:#8eeccb"><svg width="156" height="208" viewBox="521 329.500 156 208">
<defs><linearGradient id="t8g" x1="0" y1="0" x2="1" y2="0"><stop offset="0" stop-color="#99f5d3"/><stop offset=".6" stop-color="#84e6c5"/><stop offset="1" stop-color="#7cdfbd"/></linearGradient></defs>
<rect x="521" y="329.500" width="156" height="208" fill="url(#t8g)"/>
<g font-size="11.200" fill="#dcfcf0" font-weight="300" letter-spacing=".9">
<text x="528" y="384.500">とゆう感じでありがとうご</text>
<text x="528" y="402.800">ざいました！！</text>
<text x="528" y="421.200">いっぱい質問来て嬉しかっ</text>
<text x="528" y="439.600">たです！！</text>
<text x="528" y="458">リクエストなども</text>
<text x="528" y="476.400">歓迎なのでコメントしてく</text>
<text x="528" y="494.800">れたら嬉しいです</text>
<text x="528" y="513.200">またね！！</text>
</g>
</svg></div>

  <div class="thumb" style="left:972px;top:246.5px;width:209px;height:208px"><svg width="209" height="208" viewBox="972 329.500 209 208">
<rect x="993" y="344" width="165.500" height="185" fill="#f5c9c9"/>
<path d="M1136 488.500L1168 479.500 1159 511.500z" fill="#f5f1a4"/>
<path d="M1140 500l10 2-8 8z" fill="#bfe7f2"/>
<path d="M1154.600 469.600L1147.400 489.900 1164.700 487z" fill="none" stroke="#222" stroke-width="1"/>
<!-- white sticker outline -->
<path d="M1022 440Q1022 380 1048 366T1098 364Q1124 378 1126 430L1130 486Q1132 510 1128 538H1024z" fill="#fff"/>
<!-- body -->
<path d="M1030 500Q1050 490 1076 492T1124 500L1128 538H1026z" fill="#e2dedc"/>
<path d="M1032 520q10-8 20-6l-4 24h-18zM1100 514q12-2 22 8v16h-20z" fill="#d0cccb"/>
<path d="M1056 452h42l4 40-25 16-25-16z" fill="#f8eeec"/><path d="M1058 462q18 10 38 0l2 10q-20 8-42 0z" fill="#f1dedc"/>
<path d="M1040 478L1076.600 504 1115.600 478 1122 490 1078 520 1032 490z" fill="#9fcfe6"/>
<path d="M1048 486L1076.600 506 1106 486 1110 492 1077 514 1044 492z" fill="#e9f3f8"/>
<path d="M1044 498Q1060 512 1076 512T1110 498L1112 506Q1094 518 1076 518T1042 506z" fill="#ddd063"/>
<path d="M1070 512h14l4 26h-22z" fill="#d2c14f"/>
<path d="M1066 510l10 4 10-4-4 10h-12z" fill="#c4b23f"/>
<!-- face -->
<path d="M1046 400Q1052 384 1076 384T1106 402L1104 444Q1094 462 1076 464T1048 444z" fill="#f8eeee"/>
<path d="M1046 430q2 24 14 38l2-18zM1108 430q-2 24-14 38l-2-18z" fill="#e6aaa2"/>
<path d="M1054 424q8-3 16 0l-1 6q-7 3-14 0zM1084 424q8-3 16 0l-1 6q-7 3-14 0z" fill="#a9d3ec"/>
<path d="M1070 446q6 2.500 12 0" stroke="#e0b6b6" stroke-width=".8" fill="none"/>
<!-- hair -->
<path d="M1026 488Q1022 420 1036 388T1078 364Q1104 364 1116 388T1124 440L1128 490 1120 478 1116 492 1108 470 1104 420 1098 400 1092 434 1084 408 1082 438 1072 396 1066 420 1058 400 1050 430 1048 470 1042 492 1038 478z" fill="#4a4543"/>
<path d="M1060 366q8 10 6 30M1078 364q2 14-2 30M1092 368q4 12 2 28M1048 376q-6 20-6 50M1110 380q6 20 6 50" stroke="#2d2a29" stroke-width="1.200" fill="none"/>
<path d="M1050 368q14-6 28-4l-6 14-8-6-6 10z" fill="#2f2c2b"/>
</svg></div>
  <div class="label" style="left:957px;top:460px">メッシュ女子</div>

  <div class="thumb" style="left:17px;top:485.5px;width:208px;height:208px"><svg width="208" height="208" viewBox="17 569.500 208 208">
<defs>
<radialGradient id="e1" cx=".45" cy=".5" r=".6"><stop offset="0" stop-color="#04281a"/><stop offset=".45" stop-color="#0e6a45"/><stop offset="1" stop-color="#3cc08a"/></radialGradient>
<radialGradient id="e2" cx=".5" cy=".55" r=".6"><stop offset="0" stop-color="#a9c4ff"/><stop offset=".6" stop-color="#3f6fe6"/><stop offset="1" stop-color="#1d3fb0"/></radialGradient>
<radialGradient id="e3" cx=".5" cy=".7" r=".7"><stop offset="0" stop-color="#ff9a1e"/><stop offset=".5" stop-color="#e0301a"/><stop offset="1" stop-color="#7a0a0a"/></radialGradient>
<radialGradient id="e4" cx=".45" cy=".4" r=".7"><stop offset="0" stop-color="#ff8a9a"/><stop offset=".5" stop-color="#d01c38"/><stop offset="1" stop-color="#8a0a20"/></radialGradient>
<radialGradient id="e5" cx=".5" cy=".5" r=".6"><stop offset="0" stop-color="#1e6a8a"/><stop offset=".5" stop-color="#4cc0c8"/><stop offset="1" stop-color="#a6ead6"/></radialGradient>
<radialGradient id="e6" cx=".5" cy=".5" r=".6"><stop offset="0" stop-color="#f2dfe6"/><stop offset="1" stop-color="#fffaf7"/></radialGradient>
</defs>
<rect x="17" y="569.500" width="208" height="208" fill="#fff"/>
<rect x="16" y="568" width="210" height="64.300" fill="#000"/>
<text x="40.500" y="608" font-size="25" font-weight="300" fill="#fff" letter-spacing="8.200">お目目合作</text>
<!-- cell backgrounds -->
<rect x="17" y="638" width="64" height="66" fill="#fdf6ea"/><rect x="85.700" y="638" width="70.300" height="66" fill="#fbeeee"/><rect x="160.700" y="638" width="64.300" height="66" fill="#fdf5ec"/>
<rect x="17" y="709.500" width="64" height="66.500" fill="#fadcd8"/><rect x="85.700" y="709.500" width="70.300" height="66.500" fill="#fdf3ea"/><rect x="160.700" y="709.500" width="64.300" height="66.500" fill="url(#e6)"/>
<!-- eye 1 -->
<path d="M25 662Q32 650 50 648T76 660L72 686Q60 694 44 692T26 676z" fill="#fff"/>
<circle cx="50" cy="671.500" r="16.800" fill="url(#e1)" stroke="#02140c" stroke-width="1"/>
<ellipse cx="58" cy="668" rx="4" ry="8" fill="#fff" opacity=".35"/>
<path d="M23 656Q34 642 54 641.500T79 652L80 650 78 660Q76 672 72 682L70 680Q74 668 72 658 62 648 48 648.500 34 650 25 662z" fill="#0a0a0a"/>
<path d="M28 651Q40 640 60 642" stroke="#caa" stroke-width=".8" fill="none"/>
<path d="M60 691l4 1M66 688l4 1" stroke="#222" stroke-width=".8"/>
<!-- eye 2 -->
<path d="M94 672Q106 660 124 660T152 668Q140 684 120 684T94 672z" fill="#fff"/>
<ellipse cx="117" cy="673" rx="14.500" ry="10.500" fill="url(#e2)"/>
<path d="M91 671Q104 658 124 657.500T156 668.500Q142 662 124 661.500 106 662 93 674z" fill="#3a1218"/>
<path d="M98 682Q116 690 140 682" stroke="#2a1a2a" stroke-width="1" fill="none"/>
<text x="87.500" y="648.500" font-size="5.500" fill="#4466cc">ちく</text>
<!-- eye 3 -->
<path d="M168 644.500Q190 641.500 216.500 646.800" stroke="#111" stroke-width="1.600" fill="none"/>
<path d="M172 668Q186 664 200 665T214 667Q206 682 190 682T172 668z" fill="#fff"/>
<ellipse cx="188" cy="672" rx="8.500" ry="8" fill="url(#e3)"/>
<path d="M168 669Q182 663 198 663.500T218 664Q208 668 196 667.500 182 667 170 671z" fill="#0a0a0a"/>
<path d="M176 681Q190 686 206 680" stroke="#d8a" stroke-width=".8" fill="none"/>
<text x="204" y="701" font-size="5" fill="#138a7a" font-weight="500">ニダン</text>
<!-- eye 4 -->
<path d="M17 722Q50 720 81 710.500V716Q50 726 17 727z" fill="#3a1c1c"/>
<path d="M30 752Q42 736 58 736T78 748Q74 766 56 768T30 752z" fill="#fff"/>
<circle cx="55" cy="753" r="12" fill="url(#e4)"/><circle cx="51" cy="749" r="2.600" fill="#fff"/>
<path d="M22 748Q36 734 56 733.500T80 742Q66 737 54 737.500 38 739 26 752z" fill="#7a1a26"/>
<path d="M20 716q10-6 22-4t10 8M24 712q6-4 12-2" stroke="#e05a6a" stroke-width=".7" fill="none"/>
<path d="M30 760Q44 772 66 768" stroke="#c46" stroke-width=".8" fill="none"/>
<!-- eye 5 -->
<ellipse cx="118" cy="742" rx="12" ry="12.500" fill="url(#e5)"/><ellipse cx="118" cy="742" rx="3" ry="5" fill="#1a5a7a"/>
<path d="M100 734Q108 722 122 721T146 730Q134 726 122 726.500 108 728 102 738z" fill="#f2b060" opacity=".85"/>
<path d="M104 756Q118 764 136 756" stroke="#f2c890" stroke-width=".8" fill="none"/>
<path d="M98 768q6-4 12 0t10-2" stroke="#f0d8a0" stroke-width=".8" fill="none"/>
<!-- eye 6 -->
<ellipse cx="192" cy="742" rx="22" ry="12" fill="#f3d5de" opacity=".6"/>
<path d="M174 738Q186 730 200 731T214 740Q204 746 192 746T174 738z" fill="#c7a8de"/>
<path d="M172 738Q184 728 200 729T216 738" stroke="#8a6aa0" stroke-width=".9" fill="none"/>
<path d="M180 746q10 6 22 0l-2 6q-8 4-18 0z" fill="#fff"/>
<path d="M198 766q6-6 12-2t10 0" stroke="#ccc" stroke-width=".8" fill="none"/>
<!-- borders -->
<g fill="none" stroke="#3f3f3f" stroke-width="1.100">
<rect x="17" y="638" width="64" height="66"/><rect x="85.700" y="638" width="70.300" height="66"/><rect x="160.700" y="638" width="64.300" height="66"/>
<rect x="17" y="709.500" width="64" height="66.500"/><rect x="85.700" y="709.500" width="70.300" height="66.500"/><rect x="160.700" y="709.500" width="64.300" height="66.500"/>
</g>
</svg></div>
  <div class="label" style="left:1px;top:699px">お目々合作！！！</div>

  <div class="thumb" style="left:43px;top:723.800px;width:156px;height:60px"><svg width="156" height="60" viewBox="43 807.500 156 60">
<rect x="43" y="807.500" width="156" height="60" fill="#fff"/>
<rect x="43" y="807.500" width="156" height="11" fill="#f6f6f6"/>
<text x="43.500" y="810.500" font-size="2.400" fill="#555">18:44 3月5日(金)</text>
<text x="134" y="815" font-size="3.200" fill="#555" text-anchor="middle">イラスト依頼 裏の依頼者 依頼 - ibisPaint</text>
<text x="52" y="820.300" font-size="2.200" fill="#666">ibispaint.com/art/803896432/ イラスト依頼について</text>
<path d="M43 822h156" stroke="#dfe3e8" stroke-width=".5"/>
<rect x="44.500" y="824.500" width="8" height="8" fill="#a9cbe6"/><circle cx="48.500" cy="827.500" r="1.800" fill="#e6f0f8"/>
<g font-size="2.600" fill="#555"><text x="54" y="827">ナオンさん</text><text x="54" y="832" fill="#333">ありがとう！！</text><text x="54" y="836.500" fill="#333">依頼絵をお願いだけどいいですかます？？</text><text x="54" y="841.500" fill="#aaa">2021/03/05</text><text x="146" y="841.500" fill="#4a7ab0">コメントする</text></g>
<circle cx="161.500" cy="826.500" r="1.200" fill="none" stroke="#bbb" stroke-width=".4"/>
<path d="M90 846q30-12 70-2" fill="none" stroke="#777" stroke-width=".5"/>
</svg></div>
  <div class="thumb" style="left:255px;top:723.800px;width:208px;height:60px"></div>
</main>
<section class="popover">
  <svg class="arrow" width="44" height="17" viewBox="0 0 44 17"><path d="M0 17C9 17 13 13.5 17.5 6.5 20.5 1.6 21 .4 22 .4s1.500 1.200 4.500 6.100C31 13.500 35 17 44 17z" fill="#f8f8f8"/></svg>
  <div class="seg"><div class="on">写真</div><div class="off">アルバム</div></div>
  <div class="search">
    <svg width="22" height="22" viewBox="0 0 22 22"><circle cx="8.500" cy="8.200" r="5.700" fill="none" stroke="#8a8a8e" stroke-width="1.600"/><path d="M12.700 12.400l5.200 5.200" stroke="#8a8a8e" stroke-width="1.900" stroke-linecap="round"/></svg>
    <span>写真、ピープル、撮影地...</span>
  </div>
  <div class="grid">
    <div class="cell" style="left:0;top:0;background:#fff"><svg width="138" height="138" viewBox="614 204 138 138">
<rect x="614" y="204" width="138" height="138" fill="#fff"/><g fill="none" stroke="#5e5e5e" stroke-width="0.75" stroke-linecap="round" stroke-linejoin="round">
<path d="M672.200 244.700Q670 240 671 234.200 672 226 675.700 221.300 682 215.500 689.700 214.900 696 213 701.300 213.800 709 216 714.200 221.300 719 227 720 234.200 722 242 721.200 249.300 720 256 716.500 261"/>
<path d="M690.800 217.800Q686 226 685 234.200M701.300 220.200Q701 228 703.700 235.300M694 216Q697 224 696 232M712 236Q716 246 714 256L717 260M708 238Q710 246 709 254M676 224Q673 232 675 240M698 240Q697 246 699 252"/>
<circle cx="708.300" cy="232.400" r="2.100"/><path d="M706 229.500q2.300-1.500 4.600 0 1.700 2.500 0 5-2.300 1.700-4.600 0-1.700-2.500 0-5zM710 236l3 3"/>
<path d="M682.500 247Q686.500 245 691 247.500M699.500 247.500Q704 245 708.500 247" stroke-width="1.35"/>
<ellipse cx="686.800" cy="250" rx="2.700" ry="2.300"/><ellipse cx="704.300" cy="250" rx="2.700" ry="2.300"/>
<path d="M693.500 258q2-1.500 4 0 .3 2.500-2 2.500t-2-2.500zM680 254Q682 262 690 265.500 696 267 702 264.500 708 262 712 256"/>
<path d="M678 249.300L682 238Q684 232 685.800 232.500 687 234 685 240L683.800 243.500 692 238.500Q694.500 238 694 240L686 246Q688 250 686 254L682 258M678 249.300Q674 248 672 251 670 256 672 260L677 264Q681 262 682 258M672 251Q668 250 667 254"/>
<path d="M671 244.700Q663 243 654.700 243.500 640 246 626.700 251.700 621 256 619.700 262.200 619 270 621 276 623 283 625.500 287.500 630 294 636 298L653.500 310.800 658.200 312 661.700 308.500"/>
<path d="M641.800 264.500Q647 260 653.500 257.500M629 273.500Q627.500 277 629 280.500 635 283 641.800 281.700 651 278 658.200 272.300M660.500 247Q659 255 661.700 263.300L667.500 266.800M651.200 284Q656 290 658.200 295.700T659.300 303.800M655.800 280.500Q660 287 661.700 293.300"/>
<path d="M661.700 306.200Q664 314 668.700 320.200L673.300 326Q679 333 685 337.700 692 336 699 333"/>
<path d="M674.500 291V322.500H678V291M667.500 266.800Q672 272 674.500 280V291M678 291Q678 284 681 278"/>
<path d="M694.300 266Q693 274 695.500 284M690 267Q690 272 692 276M698 268Q699 274 697 280M680 272Q684 270 688 273L690 282Q690 290 687.300 295.700 684 296 682 292L680 284"/>
<path d="M696.700 287.500Q702 290 706 295.700 709 302 709.500 309.700 710 316 708.300 321.300L702.500 324.800Q695 324 688.500 319 687 312 687.300 305"/>
<path d="M690.800 299.200Q696 300 701.300 303.800M716.500 261Q722 262 727 264.500 732 270 735.200 280.500 735 286 732.800 291L729.300 292.200Q730.500 298 730.500 305 727 311 722.300 315.500L711.800 324.800H702.500"/>
<path d="M710.700 280.500Q718 277 727 277M714.200 292.200Q718 290 722.300 291 724 300 723.500 308.500M700 274Q706 270 714 268M721.200 316.700L723.500 326"/>
<path d="M654.700 328.300L660.500 326 659.300 319 666.300 317.800"/>
</g>
<path d="M718 329q3-5 7-3t-2 6q6-6 9-4t-1 6q5-5 8-2M723 323q2 8 0 15M716 336q10 4 22-2" fill="none" stroke="#cfcfcf" stroke-width="0.75"/>
</svg></div>
    <div class="cell" style="left:140px;top:0"><svg width="138" height="138" viewBox="754 204 138 138">
<rect x="754" y="204" width="138" height="138" fill="#f2f1e6"/>
<rect x="754" y="204" width="138" height="13.500" fill="#2c2b2a"/>
<text x="811" y="213" font-size="3.400" fill="#ddd" font-weight="700">マイギャラリー (130)</text>
<g fill="#888"><rect x="856" y="211" width="4" height=".8"/><circle cx="865.500" cy="211.500" r="1.500"/><path d="M873 209.500v4l3.500-2z"/><rect x="881" y="209.500" width="3.500" height="4"/></g>
<g stroke="#b9b9b3" stroke-width=".5"><rect x="756" y="219.500" width="11" height="27" fill="#fff"/><rect x="771" y="220" width="33" height="27" fill="#fff"/><rect x="808" y="219.500" width="24" height="28" fill="#fff"/><rect x="756" y="254" width="11" height="33" fill="#fff"/><rect x="776" y="254.500" width="24" height="32" fill="#fff"/><rect x="812" y="254" width="20" height="33.500" fill="#8eebca" stroke="none"/><rect x="754" y="292" width="12" height="30" fill="#fff"/><rect x="778" y="291" width="26" height="32" fill="#bcb8b3"/><rect x="810" y="292" width="22" height="31" fill="#fff"/><rect x="754" y="331" width="12" height="6" fill="#fff"/><rect x="774" y="331" width="32" height="6" fill="#fff"/><rect x="810" y="331" width="22" height="4" fill="#fff"/></g>
<rect x="811" y="223" width="19" height="23" fill="#aaa7ef"/><path d="M820 246l4-5h8v5z" fill="#454b6b"/>
<rect x="778" y="256.500" width="20" height="6.500" fill="#000"/><text x="779" y="261.800" font-size="4.200" font-weight="900" fill="#8fc5f1">目の合作</text>
<g fill="#9cc8ee"><ellipse cx="783" cy="268" rx="2.500" ry="1.800"/><ellipse cx="793" cy="268" rx="2.500" ry="1.800"/></g><ellipse cx="783" cy="275" rx="2.500" ry="1.500" fill="#c88"/>
<rect x="756" y="256" width="11" height="8" fill="#fff"/><rect x="757" y="266" width="9" height="18" fill="#d8ecf8"/>
<rect x="754" y="292" width="12" height="10" fill="#000"/>
<path d="M818 300q6-6 14-2v22q-8 2-14-4 2-8 0-16z" fill="#2a2626"/><path d="M824 304h8v10h-6z" fill="#f5eeee"/>
<g fill="none" stroke="#555" stroke-width=".45"><circle cx="790" cy="226.500" r="3.400"/><path d="M784 230l4 1M788 230q-3 5-2 9l6 2q2-6-1-11M787 239l-1 6M790 240l1 6"/><circle cx="759" cy="228" r="3"/><path d="M757 231q-2 8 0 14M761 231q2 8 0 14"/></g>
<g font-size="2.600" fill="#333"><text x="784" y="250.500">無題308</text><text x="757" y="250.500">らふ</text><text x="815" y="251">続きく</text><text x="781" y="290.500">目の合作</text><text x="784" y="327">無題306</text><text x="815" y="327">無題305</text></g>
<rect x="822.500" y="216" width="68" height="125.500" fill="#6a6a6a" opacity=".55"/>
<rect x="823.500" y="217" width="66" height="123.500" rx="1" fill="#e4e4e6"/>
<rect x="823.500" y="217" width="66" height="8" fill="#747474"/>
<text x="849" y="223" font-size="3.200" fill="#fff" font-weight="700">新規キャンバス</text>
<rect x="830" y="226" width="4.600" height="4.600" rx=".8" fill="#333"/><text x="837" y="230.300" font-size="3" fill="#444">写真読み込み</text>
<rect x="848" y="234" width="22" height="4.500" rx="1" fill="#fff"/><text x="852" y="237.500" font-size="2.700" fill="#444" letter-spacing=".5">350dpi　指定</text>
<rect x="829" y="241" width="7" height="5.500" fill="#f4f4f4" stroke="#aaa" stroke-width=".4"/>
<g fill="#222"><circle cx="842.800" cy="242" r="2"/><circle cx="842.800" cy="248" r="2"/><circle cx="881" cy="242" r="2"/><circle cx="881" cy="248" r="2"/><rect x="884.500" y="242" width="6" height="4.500" rx=".8"/></g>
<g stroke="#bbb" stroke-width="1.400" stroke-linecap="round"><path d="M848 242h29M848 248h29"/></g><g stroke="#4a8fd0" stroke-width="1.400" stroke-linecap="round"><path d="M848 242h4M848 248h3"/></g>
<text x="851" y="254.500" font-size="2.800" fill="#555">反転 ・ 回転</text>
<path d="M828 255.5h61" stroke="#c4c4c6" stroke-width=".4"/>
<rect x="829.500" y="257.1" width="6.400" height="5" fill="#fafafa" stroke="#999" stroke-width=".4"/>
<text x="837.500" y="260.9" font-size="2.900" fill="#333">SDサイズ</text>
<text x="888" y="260.9" font-size="2.900" fill="#333" text-anchor="end">1080x810</text>
<path d="M828 263.6h61" stroke="#c4c4c6" stroke-width=".4"/>
<rect x="829.500" y="265.2" width="6.400" height="5" fill="#fafafa" stroke="#999" stroke-width=".4"/>
<text x="837.500" y="269.0" font-size="2.900" fill="#333">HDサイズ</text>
<text x="888" y="269.0" font-size="2.900" fill="#333" text-anchor="end">2160x1620</text>
<path d="M828 271.8h61" stroke="#c4c4c6" stroke-width=".4"/>
<rect x="829.500" y="273.4" width="6.400" height="5" fill="#fafafa" stroke="#999" stroke-width=".4"/>
<text x="837.500" y="277.2" font-size="2.900" fill="#333">1:1</text>
<text x="888" y="277.2" font-size="2.900" fill="#333" text-anchor="end">768x768</text>
<path d="M828 279.9h61" stroke="#c4c4c6" stroke-width=".4"/>
<rect x="829.500" y="281.6" width="6.400" height="5" fill="#fafafa" stroke="#999" stroke-width=".4"/>
<text x="837.500" y="285.3" font-size="2.900" fill="#333">3:4</text>
<text x="888" y="285.3" font-size="2.900" fill="#333" text-anchor="end">1024x768</text>
<path d="M828 288.1h61" stroke="#c4c4c6" stroke-width=".4"/>
<rect x="829.500" y="289.7" width="6.400" height="5" fill="#fafafa" stroke="#999" stroke-width=".4"/>
<text x="837.500" y="293.5" font-size="2.900" fill="#333">9:16</text>
<text x="888" y="293.5" font-size="2.900" fill="#333" text-anchor="end">1280x720</text>
<path d="M828 296.2h61" stroke="#c4c4c6" stroke-width=".4"/>
<rect x="829" y="299.2" width="7.500" height="2.200" fill="#fafafa" stroke="#999" stroke-width=".4"/>
<text x="837.500" y="301.6" font-size="2.900" fill="#333">Twitterヘッダー</text>
<text x="888" y="301.6" font-size="2.900" fill="#333" text-anchor="end">1500x500</text>
<path d="M828 304.4h61" stroke="#c4c4c6" stroke-width=".4"/>
<rect x="829.500" y="306.0" width="6.400" height="5" fill="#fafafa" stroke="#999" stroke-width=".4"/>
<text x="837.500" y="309.8" font-size="2.900" fill="#333">LINEスタンプ</text>
<text x="888" y="309.8" font-size="2.900" fill="#333" text-anchor="end">370x320</text>
<path d="M828 312.6h61" stroke="#c4c4c6" stroke-width=".4"/>
<rect x="831.500" y="313.6" width="2.200" height="6.200" fill="#fafafa" stroke="#999" stroke-width=".4"/>
<text x="837.500" y="317.9" font-size="2.900" fill="#333">ハガキ</text>
<text x="888" y="317.9" font-size="2.900" fill="#333" text-anchor="end">686x1016</text>
<path d="M828 320.7h61" stroke="#c4c4c6" stroke-width=".4"/>
<rect x="829.500" y="322.3" width="6.400" height="5" fill="#fafafa" stroke="#999" stroke-width=".4"/>
<text x="837.500" y="326.1" font-size="2.900" fill="#333">ハガキ 300dpi</text>
<text x="888" y="326.1" font-size="2.900" fill="#333" text-anchor="end">1748x1181</text>
<path d="M828 328.9h61" stroke="#c4c4c6" stroke-width=".4"/>
<rect x="829.500" y="330.5" width="6.400" height="5" fill="#fafafa" stroke="#999" stroke-width=".4"/>
<text x="837.500" y="334.2" font-size="2.900" fill="#333">A4 150dpi</text>
<text x="888" y="334.2" font-size="2.900" fill="#333" text-anchor="end">1754x1240</text>
</svg></div>
    <div class="cell" style="left:280px;top:0;width:137px"><svg width="137" height="138" viewBox="894 204 137 138">
<rect x="894" y="204" width="137" height="138" fill="#f2f1e6"/>
<rect x="894" y="204" width="137" height="13.500" fill="#2c2b2a"/>
<text x="962.5" y="213" font-size="3.400" fill="#ddd" font-weight="700" text-anchor="middle">コレクション(21)</text>
<path d="M1020 210.8h3M1021.5 209.3v3" stroke="#4a9fe6" stroke-width=".7"/>
<rect x="911.5" y="218.5" width="103" height="103" fill="#fff" stroke="#c9c9c4" stroke-width=".5"/>
<g transform="translate(453.22 66.24) scale(0.7464)"><g fill="none" stroke="#5e5e5e" stroke-width="0.85" stroke-linecap="round" stroke-linejoin="round">
<path d="M672.200 244.700Q670 240 671 234.200 672 226 675.700 221.300 682 215.500 689.700 214.900 696 213 701.300 213.800 709 216 714.200 221.300 719 227 720 234.200 722 242 721.200 249.300 720 256 716.500 261"/>
<path d="M690.800 217.800Q686 226 685 234.200M701.300 220.200Q701 228 703.700 235.300M694 216Q697 224 696 232M712 236Q716 246 714 256L717 260M708 238Q710 246 709 254M676 224Q673 232 675 240M698 240Q697 246 699 252"/>
<circle cx="708.300" cy="232.400" r="2.100"/><path d="M706 229.500q2.300-1.500 4.600 0 1.700 2.500 0 5-2.300 1.700-4.600 0-1.700-2.500 0-5zM710 236l3 3"/>
<path d="M682.500 247Q686.500 245 691 247.500M699.500 247.500Q704 245 708.500 247" stroke-width="1.53"/>
<ellipse cx="686.800" cy="250" rx="2.700" ry="2.300"/><ellipse cx="704.300" cy="250" rx="2.700" ry="2.300"/>
<path d="M693.500 258q2-1.500 4 0 .3 2.500-2 2.500t-2-2.500zM680 254Q682 262 690 265.500 696 267 702 264.500 708 262 712 256"/>
<path d="M678 249.300L682 238Q684 232 685.800 232.500 687 234 685 240L683.800 243.500 692 238.500Q694.500 238 694 240L686 246Q688 250 686 254L682 258M678 249.300Q674 248 672 251 670 256 672 260L677 264Q681 262 682 258M672 251Q668 250 667 254"/>
<path d="M671 244.700Q663 243 654.700 243.500 640 246 626.700 251.700 621 256 619.700 262.200 619 270 621 276 623 283 625.500 287.500 630 294 636 298L653.500 310.800 658.200 312 661.700 308.500"/>
<path d="M641.800 264.500Q647 260 653.500 257.500M629 273.500Q627.500 277 629 280.500 635 283 641.800 281.700 651 278 658.200 272.300M660.500 247Q659 255 661.700 263.300L667.500 266.800M651.200 284Q656 290 658.200 295.700T659.300 303.800M655.800 280.500Q660 287 661.700 293.300"/>
<path d="M661.700 306.200Q664 314 668.700 320.200L673.300 326Q679 333 685 337.700 692 336 699 333"/>
<path d="M674.500 291V322.500H678V291M667.500 266.800Q672 272 674.500 280V291M678 291Q678 284 681 278"/>
<path d="M694.300 266Q693 274 695.500 284M690 267Q690 272 692 276M698 268Q699 274 697 280M680 272Q684 270 688 273L690 282Q690 290 687.300 295.700 684 296 682 292L680 284"/>
<path d="M696.700 287.500Q702 290 706 295.700 709 302 709.500 309.700 710 316 708.300 321.300L702.500 324.800Q695 324 688.500 319 687 312 687.300 305"/>
<path d="M690.800 299.200Q696 300 701.300 303.800M716.500 261Q722 262 727 264.500 732 270 735.200 280.500 735 286 732.800 291L729.300 292.200Q730.500 298 730.500 305 727 311 722.300 315.500L711.800 324.800H702.500"/>
<path d="M710.700 280.500Q718 277 727 277M714.200 292.200Q718 290 722.300 291 724 300 723.500 308.500M700 274Q706 270 714 268M721.200 316.700L723.500 326"/>
<path d="M654.700 328.300L660.500 326 659.300 319 666.300 317.800"/>
</g>
<path d="M718 329q3-5 7-3t-2 6q6-6 9-4t-1 6q5-5 8-2M723 323q2 8 0 15M716 336q10 4 22-2" fill="none" stroke="#cfcfcf" stroke-width="0.85"/></g>
<g font-size="2.700" fill="#555"><text x="918" y="326.5">タイトル: TIGHKIS 描画</text><text x="918" y="331">アーティスト: @shizuki2020</text><text x="993" y="331">制作時間: 0:14</text></g>
<rect x="988" y="218" width="43" height="96" rx="3" fill="#f7f7f8"/>
<rect x="984" y="303" width="31" height="14" rx="6" fill="#f7f7f8" opacity=".9"/>
<text x="998" y="225" font-size="2.800" fill="#333" font-weight="700">TIGHKIS 描画</text><text x="998" y="228.500" font-size="2.200" fill="#999">ibisPaint X</text>
<circle cx="995" cy="239" r="4" fill="#fff"/><path d="M992 241a3 3 0 0 1 6 0" fill="none" stroke="#3f9be8" stroke-width="1.200"/>
<rect x="1004.500" y="234" width="10" height="10" rx="2.400" fill="#2f8fea"/><rect x="1006.300" y="236.500" width="6.400" height="4.800" rx=".6" fill="#dff0ff"/>
<rect x="1019" y="234.500" width="12" height="3" rx="1" fill="#f5d24a"/>
<g font-size="2.200" fill="#666"><text x="991" y="248">AirDrop</text><text x="1006.500" y="248">メール</text><text x="1022" y="248">メモ</text></g>
<g fill="#fff"><rect x="989.500" y="251" width="41.500" height="9" rx="1.500"/><rect x="989.500" y="262" width="41.500" height="51" rx="1.500"/></g>
<g font-size="2.700" fill="#333"><text x="992" y="257">コピー</text><text x="992" y="267.500" font-weight="700">画像を保存</text><text x="992" y="276.500">連絡先に割り当てる</text><text x="992" y="285">プリント</text><text x="992" y="293.500">共有アルバムに追加</text><text x="992" y="302.500">"ファイル"に保存</text><text x="992" y="311" fill="#3f8fe0">アクションを編集...</text></g>
<g stroke="#e2e2e4" stroke-width=".4"><path d="M990 270.500h41M990 279.500h41M990 288h41M990 296.500h41M990 305.500h41"/></g>
<rect x="935" y="333" width="55" height="9.5" fill="#1c3f5f"/><rect x="936" y="334" width="7.500" height="7.5" rx="1" fill="#3f86c9"/><text x="937.2" y="340.2" font-size="6" font-weight="700" fill="#fff">iP</text><text x="945" y="337.2" font-size="2.900" fill="#fff" textLength="42">アイビスペイントの広告を表示しています</text><text x="945" y="341" font-size="2.900" fill="#dfe" textLength="31">アイビスペイントは広告モデルです</text><rect x="978" y="338.2" width="10" height="3.200" rx=".6" fill="#2ea58c"/>
</svg></div>
    <div class="cell" style="left:0;top:140px"><svg width="138" height="138" viewBox="614 344 138 138">
<rect x="614" y="344" width="138" height="138" fill="#f2f1e6"/>
<rect x="614" y="344" width="138" height="13.500" fill="#2c2b2a"/>
<text x="683.0" y="353" font-size="3.400" fill="#ddd" font-weight="700" text-anchor="middle">コレクション(21)</text>
<path d="M741 350.8h3M742.5 349.3v3" stroke="#4a9fe6" stroke-width=".7"/>
<rect x="631.5" y="358.5" width="103" height="103" fill="#fff" stroke="#c9c9c4" stroke-width=".5"/>
<g transform="translate(173.22 206.24) scale(0.7464)"><g fill="none" stroke="#5e5e5e" stroke-width="0.85" stroke-linecap="round" stroke-linejoin="round">
<path d="M672.200 244.700Q670 240 671 234.200 672 226 675.700 221.300 682 215.500 689.700 214.900 696 213 701.300 213.800 709 216 714.200 221.300 719 227 720 234.200 722 242 721.200 249.300 720 256 716.500 261"/>
<path d="M690.800 217.800Q686 226 685 234.200M701.300 220.200Q701 228 703.700 235.300M694 216Q697 224 696 232M712 236Q716 246 714 256L717 260M708 238Q710 246 709 254M676 224Q673 232 675 240M698 240Q697 246 699 252"/>
<circle cx="708.300" cy="232.400" r="2.100"/><path d="M706 229.500q2.300-1.500 4.600 0 1.700 2.500 0 5-2.300 1.700-4.600 0-1.700-2.500 0-5zM710 236l3 3"/>
<path d="M682.500 247Q686.500 245 691 247.500M699.500 247.500Q704 245 708.500 247" stroke-width="1.53"/>
<ellipse cx="686.800" cy="250" rx="2.700" ry="2.300"/><ellipse cx="704.300" cy="250" rx="2.700" ry="2.300"/>
<path d="M693.500 258q2-1.500 4 0 .3 2.500-2 2.500t-2-2.500zM680 254Q682 262 690 265.500 696 267 702 264.500 708 262 712 256"/>
<path d="M678 249.300L682 238Q684 232 685.800 232.500 687 234 685 240L683.800 243.500 692 238.500Q694.500 238 694 240L686 246Q688 250 686 254L682 258M678 249.300Q674 248 672 251 670 256 672 260L677 264Q681 262 682 258M672 251Q668 250 667 254"/>
<path d="M671 244.700Q663 243 654.700 243.500 640 246 626.700 251.700 621 256 619.700 262.200 619 270 621 276 623 283 625.500 287.500 630 294 636 298L653.500 310.800 658.200 312 661.700 308.500"/>
<path d="M641.800 264.500Q647 260 653.500 257.500M629 273.500Q627.500 277 629 280.500 635 283 641.800 281.700 651 278 658.200 272.300M660.500 247Q659 255 661.700 263.300L667.500 266.800M651.200 284Q656 290 658.200 295.700T659.300 303.800M655.800 280.500Q660 287 661.700 293.300"/>
<path d="M661.700 306.200Q664 314 668.700 320.200L673.300 326Q679 333 685 337.700 692 336 699 333"/>
<path d="M674.500 291V322.500H678V291M667.500 266.800Q672 272 674.500 280V291M678 291Q678 284 681 278"/>
<path d="M694.300 266Q693 274 695.500 284M690 267Q690 272 692 276M698 268Q699 274 697 280M680 272Q684 270 688 273L690 282Q690 290 687.300 295.700 684 296 682 292L680 284"/>
<path d="M696.700 287.500Q702 290 706 295.700 709 302 709.500 309.700 710 316 708.300 321.300L702.500 324.800Q695 324 688.500 319 687 312 687.300 305"/>
<path d="M690.800 299.200Q696 300 701.300 303.800M716.500 261Q722 262 727 264.500 732 270 735.200 280.500 735 286 732.800 291L729.300 292.200Q730.500 298 730.500 305 727 311 722.300 315.500L711.800 324.800H702.500"/>
<path d="M710.700 280.500Q718 277 727 277M714.200 292.200Q718 290 722.300 291 724 300 723.500 308.500M700 274Q706 270 714 268M721.200 316.700L723.500 326"/>
<path d="M654.700 328.300L660.500 326 659.300 319 666.300 317.800"/>
</g>
<path d="M718 329q3-5 7-3t-2 6q6-6 9-4t-1 6q5-5 8-2M723 323q2 8 0 15M716 336q10 4 22-2" fill="none" stroke="#cfcfcf" stroke-width="0.85"/></g>
<g font-size="2.700" fill="#555"><text x="638" y="466.5">タイトル: TIGHKIS 描画</text><text x="638" y="471">アーティスト: @shizuki2020</text><text x="713" y="471">制作時間: 0:14</text></g>
<rect x="724.500" y="357" width="27.500" height="20.500" fill="#6f6f6f" opacity=".7"/>
<rect x="725.500" y="361" width="26.500" height="7.500" fill="#e6e6e8"/><rect x="725.500" y="369.200" width="26.500" height="7.500" fill="#e6e6e8"/>
<text x="739" y="360" font-size="2.500" fill="#eee">ファイル出力</text><g font-size="2.800" fill="#333"><text x="727" y="366.500">画像 (PNG)</text><text x="727" y="374.700">画像 (JPEG)</text></g>
</svg></div>
    <div class="cell" style="left:140px;top:140px"><svg width="138" height="138" viewBox="754 344 138 138">
<rect x="754" y="344" width="138" height="138" fill="#f2f1e6"/>
<rect x="754" y="344" width="138" height="13.500" fill="#2c2b2a"/>
<text x="823.0" y="353" font-size="3.400" fill="#ddd" font-weight="700" text-anchor="middle">コレクション(21)</text>
<path d="M881 350.8h3M882.5 349.3v3" stroke="#4a9fe6" stroke-width=".7"/>
<rect x="771.5" y="358.5" width="103" height="103" fill="#fff" stroke="#c9c9c4" stroke-width=".5"/>
<g transform="translate(313.22 206.24) scale(0.7464)"><g fill="none" stroke="#5e5e5e" stroke-width="0.85" stroke-linecap="round" stroke-linejoin="round">
<path d="M672.200 244.700Q670 240 671 234.200 672 226 675.700 221.300 682 215.500 689.700 214.900 696 213 701.300 213.800 709 216 714.200 221.300 719 227 720 234.200 722 242 721.200 249.300 720 256 716.500 261"/>
<path d="M690.800 217.800Q686 226 685 234.200M701.300 220.200Q701 228 703.700 235.300M694 216Q697 224 696 232M712 236Q716 246 714 256L717 260M708 238Q710 246 709 254M676 224Q673 232 675 240M698 240Q697 246 699 252"/>
<circle cx="708.300" cy="232.400" r="2.100"/><path d="M706 229.500q2.300-1.500 4.600 0 1.700 2.500 0 5-2.300 1.700-4.600 0-1.700-2.500 0-5zM710 236l3 3"/>
<path d="M682.500 247Q686.500 245 691 247.500M699.500 247.500Q704 245 708.500 247" stroke-width="1.53"/>
<ellipse cx="686.800" cy="250" rx="2.700" ry="2.300"/><ellipse cx="704.300" cy="250" rx="2.700" ry="2.300"/>
<path d="M693.500 258q2-1.500 4 0 .3 2.500-2 2.500t-2-2.500zM680 254Q682 262 690 265.500 696 267 702 264.500 708 262 712 256"/>
<path d="M678 249.300L682 238Q684 232 685.800 232.500 687 234 685 240L683.800 243.500 692 238.500Q694.500 238 694 240L686 246Q688 250 686 254L682 258M678 249.300Q674 248 672 251 670 256 672 260L677 264Q681 262 682 258M672 251Q668 250 667 254"/>
<path d="M671 244.700Q663 243 654.700 243.500 640 246 626.700 251.700 621 256 619.700 262.200 619 270 621 276 623 283 625.500 287.500 630 294 636 298L653.500 310.800 658.200 312 661.700 308.500"/>
<path d="M641.800 264.500Q647 260 653.500 257.500M629 273.500Q627.500 277 629 280.500 635 283 641.800 281.700 651 278 658.200 272.300M660.500 247Q659 255 661.700 263.300L667.500 266.800M651.200 284Q656 290 658.200 295.700T659.300 303.800M655.800 280.500Q660 287 661.700 293.300"/>
<path d="M661.700 306.200Q664 314 668.700 320.200L673.300 326Q679 333 685 337.700 692 336 699 333"/>
<path d="M674.500 291V322.500H678V291M667.500 266.800Q672 272 674.500 280V291M678 291Q678 284 681 278"/>
<path d="M694.300 266Q693 274 695.500 284M690 267Q690 272 692 276M698 268Q699 274 697 280M680 272Q684 270 688 273L690 282Q690 290 687.300 295.700 684 296 682 292L680 284"/>
<path d="M696.700 287.500Q702 290 706 295.700 709 302 709.500 309.700 710 316 708.300 321.300L702.500 324.800Q695 324 688.500 319 687 312 687.300 305"/>
<path d="M690.800 299.200Q696 300 701.300 303.800M716.500 261Q722 262 727 264.500 732 270 735.200 280.500 735 286 732.800 291L729.300 292.200Q730.500 298 730.500 305 727 311 722.300 315.500L711.800 324.800H702.500"/>
<path d="M710.700 280.500Q718 277 727 277M714.200 292.200Q718 290 722.300 291 724 300 723.500 308.500M700 274Q706 270 714 268M721.200 316.700L723.500 326"/>
<path d="M654.700 328.300L660.500 326 659.300 319 666.300 317.800"/>
</g>
<path d="M718 329q3-5 7-3t-2 6q6-6 9-4t-1 6q5-5 8-2M723 323q2 8 0 15M716 336q10 4 22-2" fill="none" stroke="#cfcfcf" stroke-width="0.85"/></g>
<g font-size="2.700" fill="#555"><text x="778" y="466.5">タイトル: TIGHKIS 描画</text><text x="778" y="471">アーティスト: @shizuki2020</text><text x="853" y="471">制作時間: 0:14</text></g>
<rect x="795" y="472.5" width="55" height="9.5" fill="#1c3f5f"/><rect x="796" y="473.5" width="7.500" height="7.5" rx="1" fill="#3f86c9"/><text x="797.2" y="479.7" font-size="6" font-weight="700" fill="#fff">iP</text><text x="805" y="476.7" font-size="2.900" fill="#fff" textLength="42">アイビスペイントの広告を表示しています</text><text x="805" y="480.5" font-size="2.900" fill="#dfe" textLength="31">アイビスペイントは広告モデルです</text><rect x="838" y="477.7" width="10" height="3.200" rx=".6" fill="#2ea58c"/>
</svg></div>
    <div class="cell" style="left:280px;top:140px;width:137px"><svg width="137" height="138" viewBox="894 344 137 138">
<rect x="894" y="344" width="137" height="138" fill="#f2f1e6"/>
<rect x="894" y="344" width="137" height="13.500" fill="#2c2b2a"/>
<text x="962" y="353" font-size="3.400" fill="#ddd" font-weight="700" text-anchor="middle">コレクション(21)</text>
<path d="M1021 350.800h3M1022.500 349.300v3" stroke="#4a9fe6" stroke-width=".7"/>
<rect x="892" y="358" width="13" height="31.500" fill="#fff" stroke="#d2d2cc" stroke-width=".5"/><rect x="913.300" y="358" width="25.700" height="31.500" fill="#fff" stroke="#d2d2cc" stroke-width=".5"/><rect x="945" y="358" width="35" height="31.500" fill="#fff" stroke="#d2d2cc" stroke-width=".5"/><rect x="985.800" y="358" width="25" height="31.500" fill="#fff" stroke="#f3c9a6" stroke-width=".8"/><rect x="1018" y="358" width="16" height="31.500" fill="#fff" stroke="#f3c9a6" stroke-width=".8"/>
<rect x="914" y="359" width="12" height="12" fill="#8a7fd8"/><path d="M916 371q2-8 6-8t4 8z" fill="#7a1c2a"/><path d="M926 359v30M914 371h25M914 381h25" stroke="#444" stroke-width=".5"/><path d="M927 382h11v7h-11z" fill="#444" opacity=".7"/>
<g stroke="#9a9ab0" stroke-width=".4" fill="none"><path d="M948 363h10M948 367h9M948 371h10M948 375h8M948 379h10M948 383h9M972 366h6M972 372h5"/></g><path d="M964 362q4-3 7 0l-1 5h-5z" fill="#c9c9d6"/><rect x="964.500" y="367.500" width="6" height="9" fill="#b9bac8"/><path d="M965 376.500h2.200v9H965zM968 376.500h2.200v9H968z" fill="#555a72"/>
<g fill="none" stroke="#f3c9a6" stroke-width=".5"><path d="M986 362h25M997 362v22M997 384h14"/></g>
<g stroke="#8a3fc0" stroke-width=".8"><path d="M1021 364h9M1021 372h9M1021 380h9"/></g><path d="M1020 368h11M1020 376h11M1020 384h11" stroke="#aaa" stroke-width=".3" stroke-dasharray=".8 .6"/>
<rect x="892" y="394" width="9" height="32" fill="#fff" stroke="#d2d2cc" stroke-width=".5"/><rect x="892" y="396" width="8" height="7" fill="#000"/>
<rect x="910" y="394" width="31.700" height="32" fill="#fff" stroke="#d2d2cc" stroke-width=".5"/><rect x="910" y="394" width="31.700" height="10" fill="#000"/>
<text x="912.500" y="401.300" font-size="4.400" fill="#fff" font-weight="300" letter-spacing="1.300">お目目合作</text>
<g stroke="#555" stroke-width=".4"><rect x="910.500" y="405.500" width="9.800" height="10" fill="#fdf6ea"/><rect x="921" y="405.500" width="10" height="10" fill="#fbeeee"/><rect x="931.700" y="405.500" width="9.800" height="10" fill="#fdf5ec"/><rect x="910.500" y="416.200" width="9.800" height="9.600" fill="#fadcd8"/><rect x="921" y="416.200" width="10" height="9.600" fill="#fdf3ea"/><rect x="931.700" y="416.200" width="9.800" height="9.600" fill="#fff"/></g>
<circle cx="915.400" cy="410.500" r="2.600" fill="#15744c"/><ellipse cx="926" cy="410.500" rx="2.600" ry="1.700" fill="#4a6fe0"/><ellipse cx="936.500" cy="410.500" rx="2.400" ry="1.400" fill="#c03a1a"/><circle cx="915.400" cy="421.500" r="2" fill="#c01c38"/><ellipse cx="926" cy="421" rx="1.500" ry="2" fill="#4cc0c8"/>
<rect x="944.700" y="396.700" width="35.300" height="26.300" fill="#3b3b3b"/><g fill="#2a2a2a"><path d="M946 423q0-10 4-13-2-4 1-7t6 1q1 4-1 6 5 3 5 13z"/><path d="M957 423q0-12 5-14-2-5 2-8t7 2q1 4-2 6 5 3 5 14z"/><path d="M969 423q1-11 5-13-1-5 3-6t3 2v17z"/></g>
<rect x="986.700" y="394" width="23.300" height="32" fill="#fff" stroke="#d2d2cc" stroke-width=".5"/><path d="M992 402q3-4 7-1l1 5 5 8-2 10h-10l-2-12z" fill="#bfe6ec"/><path d="M993 401q3-4 7-1l-1 4h-5z" fill="#c2643a"/><rect x="996" y="417" width="6" height="7" fill="#b04a4a"/>
<rect x="1016.700" y="394" width="17" height="32" fill="#fff" stroke="#d2d2cc" stroke-width=".5"/><rect x="1017" y="397" width="14" height="3.200" fill="#8a3fd8"/>
<rect x="892" y="430" width="14.500" height="32.500" fill="#fff" stroke="#d2d2cc" stroke-width=".5"/><circle cx="900" cy="436" r="2.600" fill="#222"/><path d="M895 444h10M896 448h9M895 452l4 2 5-3" stroke="#667" stroke-width=".5" fill="none"/><rect x="894" y="441" width="12" height="6" fill="#d9dcf2"/>
<rect x="908.300" y="430" width="35" height="32.500" fill="#fff" stroke="#d2d2cc" stroke-width=".5"/><circle cx="918.500" cy="435" r="2.700" fill="#111"/><circle cx="934" cy="435" r="2.700" fill="#111"/><g fill="none" stroke="#777" stroke-width=".45"><path d="M917 438q9-6 18 0 4 8 0 16-9 6-18 0-4-8 0-16zM920 444q3-2 5 0M928 444q3-2 5 0M922 450q4 4 8 0M914 456q-2 3 0 6M938 456q2 3 0 6"/></g>
<rect x="944" y="432.500" width="36" height="28.300" fill="#f0d9d9"/><path d="M966 436q6-4 11 1l1 8-4 5h-8l-3-6z" fill="#d8584a"/><path d="M968 441h8l-1 7h-6z" fill="#fbeee8"/><path d="M956 450q10-4 24 0v10h-28z" fill="#6f86c4"/><rect x="950" y="436" width="6" height="7" fill="#fbeeee" stroke="#d88" stroke-width=".4"/><path d="M944 452q8-4 14 2v6h-14z" fill="#f4c6c0"/>
<rect x="984" y="430" width="28.800" height="32.500" fill="#c4183a"/><path d="M990 434h17M990 458h17" stroke="#f4c0c8" stroke-width=".4"/><path d="M992 440q6-6 13 0l2 10-3 4h-11l-3-4z" fill="#8a4038"/><path d="M988 462.500l6-10h9l7 10z" fill="#4a6ab8"/><rect x="996" y="444" width="5" height="5" fill="#f0d0c0"/>
<rect x="1019" y="430" width="14" height="32.500" fill="#fff" stroke="#d2d2cc" stroke-width=".5"/><path d="M1024 434q4-3 7 0v6h-7z" fill="#c0283a"/><path d="M1022 441h9v12h-9z" fill="#9fd6e6"/><path d="M1024 453h7v6h-7z" fill="#2a3a8a"/>
<rect x="910" y="466.700" width="31.700" height="16" fill="#fff" stroke="#d2d2cc" stroke-width=".5"/><rect x="910" y="467" width="31.700" height="5" fill="#000"/><text x="912" y="471" font-size="3" fill="#fff">ポイント描いてて見たくて</text>
<rect x="948" y="466.700" width="28.700" height="16" fill="#fff" stroke="#d2d2cc" stroke-width=".5"/>
<rect x="983" y="466.700" width="31" height="6" fill="#2a2a4a"/><rect x="992" y="467" width="10" height="5.500" fill="#e86aa0"/><rect x="1004" y="467" width="9" height="5.500" fill="#141430"/><path d="M984 468l3 3 3-3" stroke="#fff" stroke-width=".6" fill="none"/>
<rect x="1017" y="466.700" width="16" height="6" fill="#fff" stroke="#d2d2cc" stroke-width=".5"/>
<g font-size="2.500" fill="#555"><text x="914" y="392.600">目標制作者用テスト</text><text x="955" y="392.600">モモさくん</text><text x="981" y="392.600">キャラ募集（リクエストなども）</text><text x="1021" y="392.600">カラパレ</text><text x="916" y="429">お目目合作</text><text x="948" y="428.500">クリスマスだし集・放送</text><text x="992" y="429">模写テスト</text><text x="922" y="465">無題</text><text x="955" y="464.500">なかよし組</text><text x="990" y="465.500">コラボ企画</text></g>
<rect x="935.8" y="472.5" width="53.5" height="8.7" fill="#1c3f5f"/><rect x="936.8" y="473.5" width="7.500" height="6.699999999999999" rx="1" fill="#3f86c9"/><text x="938.0" y="479.7" font-size="6" font-weight="700" fill="#fff">iP</text><text x="945.8" y="476.7" font-size="2.900" fill="#fff" textLength="40.5">アイビスペイントの広告を表示しています</text><text x="945.8" y="480.5" font-size="2.900" fill="#dfe" textLength="29.5">アイビスペイントは広告モデルです</text><rect x="977.3" y="477.7" width="10" height="3.200" rx=".6" fill="#2ea58c"/>
</svg></div>
    <div class="cell r3" style="left:0;top:280px;height:136px;background:#254979"><svg width="138" height="138" viewBox="614 483 138 138">
<rect x="614" y="483" width="138" height="138" fill="#254979"/>
<rect x="614" y="558" width="138" height="63" fill="#1c3d69"/>
<text x="647.300" y="513.500" font-size="17.500" fill="#fff" font-weight="400" letter-spacing="-.2">ibis</text>
<text x="688" y="513.500" font-size="17.500" fill="#fff" font-weight="700" letter-spacing="-.6">aint</text>
<g><path d="M675.500 499v15.500h4v-6z" fill="#fff"/><path d="M682 503.500L682 496.500A7 7 0 0 1 687 498.600z" fill="#f5d020"/><path d="M682 503.500L687 498.600A7 7 0 0 1 689 503.500z" fill="#f08a1e"/><path d="M682 503.500L689 503.500A7 7 0 0 1 687 508.400z" fill="#e8305a"/><path d="M682 503.500L687 508.400A7 7 0 0 1 682 510.500z" fill="#b030c0"/><path d="M682 503.500L682 510.500A7 7 0 0 1 677 508.400z" fill="#3a58d8"/><path d="M682 503.500L677 508.400A7 7 0 0 1 675 503.500z" fill="#28a8e8"/><path d="M682 503.500L675 503.500A7 7 0 0 1 677 498.600z" fill="#30c878"/><path d="M682 503.500L677 498.600A7 7 0 0 1 682 496.500z" fill="#a8d830"/><circle cx="682" cy="503.500" r="2.600" fill="#254979"/></g>
<text x="680" y="518.800" font-size="3" fill="#fff" font-weight="700">アイビスペイント Ver.8.1.0</text>
<circle cx="645" cy="534.700" r="10.300" fill="none" stroke="#4f6f9e" stroke-width=".7"/>
<circle cx="683.3" cy="534.700" r="10.300" fill="none" stroke="#4f6f9e" stroke-width=".7"/>
<circle cx="721.7" cy="534.700" r="10.300" fill="none" stroke="#4f6f9e" stroke-width=".7"/>
<path d="M641 538.500l7-7.500 1.500 1.500-7.500 7z" fill="none" stroke="#dfe8f5" stroke-width=".7"/>
<path d="M683.300 530l1.400 3.300 3.500.3-2.700 2.300.9 3.500-3.100-1.900-3.100 1.900.9-3.500-2.700-2.300 3.500-.3z" fill="none" stroke="#dfe8f5" stroke-width=".7"/>
<g fill="none" stroke="#dfe8f5" stroke-width=".6"><circle cx="721.700" cy="534.700" r="4.800"/><ellipse cx="721.700" cy="534.700" rx="2" ry="4.800"/><path d="M717 534.700h9.500M718 532h7.500M718 537.500h7.500"/></g>
<g font-size="2.900" fill="#fff" font-weight="700" text-anchor="middle"><text x="645" y="549.800">マイギャラリー</text><text x="683.300" y="549.800">コレクション</text><text x="721.700" y="549.800">オンラインギャラリー</text></g>
<text x="683.300" y="564" font-size="3.800" fill="#fff" font-weight="700" text-anchor="middle">デイリーランキング</text>
<g fill="#f2c230"><circle cx="646" cy="568" r="1.100"/><circle cx="683" cy="568" r="1.100"/><circle cx="720" cy="568" r="1.100"/></g>
<g font-size="1.900" fill="#cdd"><text x="648" y="568.700">1st</text><text x="685" y="568.700">2nd</text><text x="722" y="568.700">3rd</text></g>
<rect x="635" y="570" width="25.500" height="34" fill="#e9eef4"/><path d="M640 600q2-22 8-26 6 4 8 26z" fill="#d5dde8"/><path d="M644 580q4-6 8 0v8h-8z" fill="#f5f2f0"/>
<rect x="672.200" y="570" width="25.300" height="34" fill="#f9dfe8"/><path d="M674 578q6-8 12-2l2 12-6 14h-8z" fill="#9fe6d8"/><path d="M684 574q8-2 12 6v22h-10z" fill="#f6bcd2"/><circle cx="684" cy="582" r="3" fill="#fff7f2"/><path d="M676 596q10-6 20 0v8h-20z" fill="#cfe4f6"/>
<rect x="705" y="570" width="34" height="34" fill="#4a3a5e"/><path d="M711 574a5 5 0 1 0 4 8 4 4 0 1 1-4-8z" fill="#f0d8a0"/><path d="M718 604q0-20 8-24 8 4 10 24z" fill="#b49ab8"/><path d="M722 582q4-4 8 0v6h-8z" fill="#e8d6d8"/><g fill="#e8d8f0"><circle cx="709" cy="590" r=".5"/><circle cx="734" cy="574" r=".5"/><circle cx="716" cy="596" r=".5"/><circle cx="730" cy="578" r=".4"/></g>
<rect x="746.700" y="570" width="6" height="34" fill="#3a2a3a"/><rect x="747" y="580" width="5" height="14" fill="#e8c0b0"/>
<g font-size="2.200" fill="#dde" text-anchor="middle"><text x="648" y="608">白猫</text><text x="685" y="608">スプリング・パステルドリーム</text><text x="685" y="611">(Instagram:@illust.bloom)</text><text x="722" y="608">月夜の魔女</text></g>
</svg></div>
    <div class="cell r3" style="left:140px;top:280px;height:136px;background:#fff"><svg width="138" height="138" viewBox="754 483 138 138">
<rect x="754" y="483" width="138" height="138" fill="#fff"/>
<rect x="754" y="483" width="138" height="10" fill="#f6f6f6"/>
<text x="823" y="490.300" font-size="3" fill="#444" text-anchor="middle">TIGHKIS 描画 - ibisPaint</text>
<text x="754.500" y="495.500" font-size="1.800" fill="#666">ibispaint.com/art/803896432/</text>
<g fill="none" stroke="#777" stroke-width=".5"><path d="M774 502q4-2 5-6M787 497q3 10 12 14l12-8M800 497q8 6 18 4t6-4M826 498q2 6 6 8"/></g>
<path d="M828 504q4-6 10-2t-4 8 6-4 8-2 2 6-8 6" fill="none" stroke="#c8c8c8" stroke-width=".5"/>
<rect x="802.500" y="516.500" width="42" height="7" rx="1.500" fill="#fff" stroke="#9fc3dd" stroke-width=".5"/><text x="806" y="521.300" font-size="2.500" fill="#6a9cc0">この作品についてコメントする</text><circle cx="851" cy="520" r="1.500" fill="none" stroke="#9ab" stroke-width=".4"/>
<text x="820" y="527" font-size="2" fill="#888">TIGHKIS 描画　2021/03/05</text>
<path d="M754 529h96" stroke="#e4e8ec" stroke-width=".4"/>
<text x="755" y="533.500" font-size="2.700" fill="#2a4a6a" font-weight="700">shizuki　さんの　アートワーク</text><text x="755" y="537.500" font-size="2.200" fill="#6aa0d0">参考Twitter</text>
<circle cx="848.500" cy="538" r="2.300" fill="none" stroke="#aaa" stroke-width=".4"/><path d="M847.300 538h2.400" stroke="#aaa" stroke-width=".4"/>
<path d="M754 542h96" stroke="#e4e8ec" stroke-width=".4"/>
<g font-size="2.300" fill="#8a8a8a" text-anchor="middle"><text x="763" y="547.500">いいね！</text><text x="799" y="547.500">ブックマーク</text><text x="835" y="547.500">ランキング</text></g>
<g font-size="3.200" fill="#333" font-weight="700" text-anchor="middle"><text x="763" y="552.500">7</text><text x="799" y="552.500">2</text><text x="835" y="552.500">49</text></g>
<rect x="754" y="558.500" width="26" height="8" rx=".8" fill="#fff" stroke="#a8c8e0" stroke-width=".5"/><text x="767.0" y="564" font-size="2.600" fill="#4a7aa0" text-anchor="middle">ツイート</text>
<rect x="780" y="558.500" width="32" height="8" rx=".8" fill="#fff" stroke="#a8c8e0" stroke-width=".5"/><text x="796.0" y="564" font-size="2.600" fill="#4a7aa0" text-anchor="middle">ダウンロード</text>
<rect x="815.5" y="558.500" width="32" height="8" rx=".8" fill="#fff" stroke="#a8c8e0" stroke-width=".5"/><text x="831.5" y="564" font-size="2.600" fill="#4a7aa0" text-anchor="middle">動画を見る</text>
<path d="M754 576h98M754 588h98" stroke="#e8ecf0" stroke-width=".4"/>
<text x="755" y="583" font-size="3.200" fill="#444" font-weight="700">ハボコメント</text><rect x="843.500" y="579.500" width="4.500" height="3" fill="#999"/>
<g font-size="2.200" fill="#666"><text x="755" y="600">"TIGHKIS 描画"には50文字までのコメントが</text><text x="755" y="604">入力できます</text><text x="755" y="609" fill="#8ab">コメント</text><text x="834" y="609" fill="#5a8ab8">Top　 ・ ・ ・</text></g>
<rect x="853" y="497.500" width="39" height="20" fill="#14233c"/><rect x="855" y="499" width="7" height="7" rx="1" fill="#2f6fb8"/><text x="856" y="504.500" font-size="5" fill="#fff" font-weight="700">iP</text><text x="864" y="503" font-size="2.400" fill="#cde">ibisPaint</text><text x="855" y="513" font-size="6.500" fill="#e8f0b0" font-weight="700" letter-spacing="-.3">ibisPaint</text><rect x="855" y="514" width="29" height="3" fill="#fff"/><text x="856" y="516.400" font-size="2.200" fill="#246">アイビスペイントを始めよう</text>
<rect x="853" y="521" width="39" height="31" fill="#1f74cc"/><rect x="856.500" y="527.500" width="13.500" height="13.500" rx="2.500" fill="#1a3c78"/><text x="858.300" y="538.500" font-size="10.500" fill="#fff" font-weight="700" letter-spacing="-.6">iP</text><text x="874" y="531.500" font-size="2.700" fill="#fff">無料のお絵かき</text><text x="873.500" y="541" font-size="6.200" fill="#d8f0ff" font-weight="700" letter-spacing="-.3">ibisPa</text><rect x="853" y="548" width="39" height="4" fill="#14233c"/><text x="860" y="551" font-size="2.200" fill="#9ab">世界で1億ダウンロードのお絵かきアプリ</text>
<rect x="754" y="612" width="138" height="9" fill="#f2f1e6"/>
<rect x="796" y="612" width="54" height="8.5" fill="#1c3f5f"/><rect x="797" y="613" width="7.500" height="6.5" rx="1" fill="#3f86c9"/><text x="798.2" y="619.2" font-size="6" font-weight="700" fill="#fff">iP</text><text x="806" y="616.2" font-size="2.900" fill="#fff" textLength="41">アイビスペイントの広告を表示しています</text><text x="806" y="620" font-size="2.900" fill="#dfe" textLength="30">アイビスペイントは広告モデルです</text><rect x="838" y="617.2" width="10" height="3.200" rx=".6" fill="#2ea58c"/>
</svg></div>
    <div class="cell r3" style="left:280px;top:280px;height:136px;width:137px;background:#fff"><svg width="137" height="138" viewBox="894 483 137 138">
<rect x="894" y="483" width="137" height="138" fill="#fff"/>
<rect x="894.500" y="486" width="64" height="49" fill="#7f74d6"/>
<path d="M894.500 486h64v20q-20 10-40 6l-24 10z" fill="#5a62cc"/>
<path d="M940 512q10-4 18 4v19h-22z" fill="#b58ae0"/>
<path d="M908 500q4-14 22-14t22 16l-4 18q-10 12-24 8-14-8-16-28z" fill="#e9ebf2"/>
<path d="M910 496l-4-6 8 2 2-6 4 6 6-6 2 8 8-6v8l8-2-4 8 8 4-8 2M914 498q4 10 2 20M924 492q0 12 6 22M936 494q4 8 10 12M944 498q4 10 2 20" fill="none" stroke="#8a8ea0" stroke-width=".7"/>
<path d="M926 508q8-4 16 0l-2 12q-6 6-14 2z" fill="#fbf3f0"/><path d="M932 511q4-2 8 0" stroke="#445" stroke-width=".8" fill="none"/><path d="M930 520q4 3 8 0" stroke="#a55" stroke-width=".6" fill="none"/>
<path d="M894.500 512l12-10 8 8 4 24h-24z" fill="#8a1c2a"/><path d="M912 506l10-2 6 14-2 17h-12z" fill="#7a1a28"/><path d="M904 504l10-2 2 10-10 6z" fill="#f4ecec"/><path d="M918 530q10-6 22 0l2 5h-26z" fill="#fff" opacity=".8"/><path d="M924 528q12 2 24-2v9h-26z" fill="#a01c34"/>
<g stroke="#3a3a3a" stroke-width="1" fill="none"><path d="M894 485.500h137M894 535.500h137M894 584.500h137M959 485.500v136"/></g>
<path d="M958.200 485.500v136" stroke="#777" stroke-width=".6"/>
<g font-size="6.400" fill="#111" font-weight="700" letter-spacing="-.2"><text x="962" y="594.500">すみませんコメント</text><text x="963" y="604">できなくて、ここでし</text><text x="962" y="613.500">てもいいですか？</text></g>
</svg></div>
    <div class="cell" style="left:0;top:418px;background:#fff"><svg width="138" height="138" viewBox="614 622 138 138">
<rect x="614" y="622" width="138" height="138" fill="#fefeff"/>
<g fill="#8a8a96" font-weight="300"><text x="632" y="635.500" font-size="3.500">ごめん</text><text x="631.500" y="646" font-size="9.500" fill="#9a9aa6" letter-spacing="2">裏斗</text><text x="658" y="645" font-size="5.500" fill="#9a9aa6">くん</text><g font-size="5.600" letter-spacing=".2"><text x="631.500" y="669" textLength="42">・良かった事がある</text><text x="631.500" y="679.500" textLength="47">・この子ももちゃん上手！</text><text x="631.500" y="690" textLength="48">・もっと上の お兄さんは、</text><text x="631.500" y="700.500" textLength="50">・ある猫の（リート）</text><text x="631.500" y="711.500" textLength="52">・うなが プリンス（男子</text></g><g font-size="3.400"><text x="644" y="716.500">すきなもの</text><text x="641" y="734">ハンバーグ</text><text x="666" y="716.500">"きらいなもの"</text><text x="667" y="722">・雑草</text><text x="667" y="727">・おばけとか</text><text x="666" y="732">虫とかいっぱい</text><text x="670" y="736.500">でるやつ</text><text x="638" y="744">趣味</text><text x="640" y="751.500">ゲーム</text><text x="657" y="741.500">性格のおはなし</text><text x="657" y="746">・とにかく やさしい</text><text x="660" y="750.500">いじっぱり</text><text x="658" y="755">なまけものです</text><text x="719" y="671.500">チョーカー</text><text x="721" y="676">アイパッチ</text><text x="726" y="682">セーターから</text><text x="722" y="688">ちょっとでるくらいの服</text><text x="729" y="698.500">ジーンズ</text><text x="726" y="704">破れてるところが</text><text x="728" y="718">こんなかんじで</text><text x="729" y="723.500">えがく子も。</text><text x="694" y="757">くつした</text></g></g>
<g fill="none" stroke="#a8a8b4" stroke-width=".5"><path d="M631 652.400L677.800 643.300M651.400 633V660"/><ellipse cx="650" cy="715.500" rx="7.500" ry="2.600"/><path d="M636 721q-2 14 1 18h26v-20M664 714q14-2 26 2M666 718v20q10 4 22-2M690 716q6 8 0 20M634 742h22l2 6M636 746h20v8h-20zM656 740h30v18M690 742q8 2 10 14"/><rect x="646" y="724" width="4.500" height="4" rx="1"/><rect x="654" y="723.500" width="4" height="5" rx="1"/><rect x="723.500" y="711.500" width="30" height="45" rx="6" stroke-width=".9"/><path d="M716 668q-2 8 4 12M716 684q4 4 10 2M718 678h16M719 681h12" /><circle cx="731.500" cy="733" r="4.600"/><path d="M729 738q-2 8 2 14 8 4 14-2"/><path d="M640 756q20 4 44 0"/></g>
<circle cx="733.500" cy="652.400" r="3.500" fill="#dcdde9"/><circle cx="733.500" cy="665.300" r="3.800" fill="#5d6488"/>
<path d="M742 728q4-4 8 0l2 6-2 8h-8l-2-8z" fill="#545478"/><path d="M744 736h6v8h-6z" fill="#8a8aa8"/>
<path d="M693 679Q704 675 717 679L720 700 719.500 712 715 712.500 714 700H697L694 712.500 691 712 691.500 696z" fill="#a6a7b7"/>
<path d="M697 699.500h15.500l-.5 41.500h-5.500l-1.500-30-2 30h-5.500z" fill="#4d5370"/>
<path d="M699 712h4M707 718h4M699 726h5M707 730h4M700 736h3" stroke="#b9bdd0" stroke-width="1"/>
<rect x="703.800" y="699" width="1.800" height="16" fill="#26262e"/>
<path d="M689 748q2-6 8-7l5 1v8h-13zM706 742l6-1q6 2 6 8v2h-13z" fill="#2a2a33"/><path d="M689 750h13M705 751h13" stroke="#e8e8ee" stroke-width="1.200"/>
<path d="M696 673q6-3 12 0l-1 5q-5 2-10 0z" fill="#3a3a44"/>
<path d="M689 660Q690 672 701 674T714 664L712 654H692z" fill="#fbf8f8"/>
<path d="M683 656Q682 640 694 635L700 631 702 635Q714 633 720 642T724 656L720 662 718 654 712 650 704 646 700 656 696 648 692 658 688 668 684 664z" fill="#cfd0dd"/>
<path d="M686 650q2-10 10-14M700 634q10 0 16 6M704 646q6-2 12 4M690 658q2-8 8-12M718 646q4 6 4 12M694 640l-4-4M708 636l4-4M714 640l6-2" fill="none" stroke="#8e90a6" stroke-width=".7"/>
<path d="M705 660q5-2 8 1l-1 4q-4 2-7-1z" fill="#1c1c22"/><path d="M690 660.500h8" stroke="#444" stroke-width=".8"/><path d="M688 663q10-6 30 0" stroke="#555" stroke-width=".4" fill="none"/>
<rect x="690.500" y="671" width="3" height="7.500" rx="1" fill="#3a3a44"/><path d="M703 684l2 3 2-3z" fill="#222"/>
</svg></div>
    <div class="cell" style="left:140px;top:418px;background:#fff"><svg width="138" height="138" viewBox="754 622 138 138">
<g transform="translate(122.53 564.06) scale(0.651)">
<rect x="970" y="89" width="212" height="212" fill="#fff"/>
<text x="977" y="111" font-size="7.500" fill="#333" font-weight="300">裏なしです！</text>
<text x="972" y="131" font-size="17.500" fill="#3a3a3a" font-weight="300" letter-spacing=".5">『カラパレ合作』</text>
<g font-size="8.400" fill="#3a3a3a" font-weight="400" text-anchor="middle"><text x="1142" y="110.500">上の4色だけを</text><text x="1142" y="124.500">使って絵を</text><text x="1142" y="136">描いて！</text></g>
<g opacity=".8"><path d="M1074 150q8-6 17-2 8 6 10 18l5 22h-34l4-12q-6-12-2-26z" fill="#d9546a"/><path d="M1079 158q6-5 13-1l3 12q-4 8-11 7-6-6-5-18z" fill="#fbe9e4"/><path d="M1093 164l5 2 3 14-5 1z" fill="#45c3cf"/><path d="M1074 176l8 4h12l8-2 5 10h-36z" fill="#cf4a5c"/><path d="M1080 150q-4 8-3 14M1086 148q-2 6 0 12M1092 150q2 6 6 10M1083 167q3 3 7 0" stroke="#b23a4a" stroke-width=".8" fill="none"/></g>
<g opacity=".75"><path d="M1126 164q2-14 20-16 16 0 20 14l-2 8q-18-8-36 0z" fill="#cfdc8e"/><path d="M1130 168q14-6 32 0l-3 14q-12 8-24 0z" fill="#f3f5ee"/><path d="M1136 170l6-1 1 8-6 1zM1150 169l6 1-1 8-6-1z" fill="#7d8fe0"/><path d="M1132 180q12 8 26 0l-4 8h-18z" fill="#d6f2e3"/><path d="M1128 162q8-10 18-10M1150 152q10 2 14 10M1138 156l-2 8M1148 154l2 8M1156 158l2 6" stroke="#a9bd5a" stroke-width=".7" fill="none"/></g>
<g opacity=".75"><path d="M1078 202q4-6 14-7 12 0 16 10l3 22-4 4-5-12-2 8h-16l-3-6-5 8-3-4z" fill="#b66fd6"/><path d="M1086 208q6-3 12 0l1 12q-6 6-12 2z" fill="#f6ecf4"/><path d="M1087 210l5-1 2 14-6 2z" fill="#4a55c8"/><path d="M1076 206l-3 20M1108 206l3 20M1084 200q-4 6-6 14M1100 199q4 6 6 14" stroke="#9550bf" stroke-width=".8" fill="none"/><path d="M1063 229q8-3 16 0t14-1" stroke="#c9a8e2" stroke-width=".8" fill="none"/><circle cx="1086" cy="210" r="1.300" fill="#e8e04a"/></g>
<g opacity=".8"><path d="M1134 206q4-10 14-10 12 0 14 12l2 20-6 4h-22l-4-10z" fill="#ecea9c"/><path d="M1138 210q8-4 16 0l1 12q-8 8-17 1z" fill="#fbf6ee"/><path d="M1141 214l4-1 1 5-4 1zM1150 213l4 1v5l-4 1z" fill="#8a4fd0"/><path d="M1127 206q4-4 8 0t-2 8q6 2 4 10l-4 8q-4-6-2-14-6-2-4-12z" fill="none" stroke="#4f57c9" stroke-width="1"/><path d="M1136 204q-4 10-2 24M1160 204q4 10 4 24M1144 198q-4 4-6 10M1152 198q4 4 6 10M1140 228q6 4 14 0" stroke="#c9c45a" stroke-width=".7" fill="none"/><path d="M1167 200q3-4 1-8M1166 208q4 2 2 8t2 10M1163 214l6-2" stroke="#6a86d8" stroke-width=".7" fill="none"/></g>
<g opacity=".75"><path d="M1064 252q4-10 16-10 12 0 16 12l2 12-6 10 10 6v-2H1060l2-8 6-4z" fill="#8fe5c5"/><path d="M1070 254q8-4 18 0l1 12-6 8-4 12h-4l-2-12-5-8z" fill="#f7f1ec"/><path d="M1072 257l6-1 1 4-6 1zM1083 256l6 1-1 4-6-1z" fill="#8a7fe0"/><path d="M1060 274l12 2 4 8h-18zM1082 276l14-2 8 6v4h-24z" fill="#6fd4bd"/><path d="M1066 250q-4 10-2 20M1096 252q4 8 2 18M1076 244l-2 10M1086 244l2 10M1090 246q6-6 4-12M1098 262q6 2 6 8" stroke="#5fbfa6" stroke-width=".7" fill="none"/><circle cx="1100" cy="259" r="1.500" fill="none" stroke="#e69a7a" stroke-width=".6"/></g>
<g opacity=".9"><path d="M1132 258q2-14 16-14 14 0 16 14l2 14q8 4 6 12h-46q-2-8 6-12z" fill="#f4e9f4"/><path d="M1140 244q8-6 18 0l-2 3h-14z" fill="#f7f4fa" stroke="#e7d9ee" stroke-width=".6"/><path d="M1138 258l6-1 1 4-6 1zM1150 257l6 1-1 4-6-1z" fill="#c6a8e6"/><path d="M1134 256q-2 10 0 18M1162 256q4 10 2 18M1128 276q4-6 10-4M1166 268q8 2 8 10M1160 276q4-4 10 0M1130 280q10-4 18 0M1152 270q2 6 8 6M1140 268q4 3 9 0" stroke="#c9cdf0" stroke-width=".7" fill="none"/><path d="M1133 262q-2 6 1 10M1164 262q2 6-1 10" stroke="#f0c6dc" stroke-width=".8" fill="none"/></g>
<g stroke="#4a4a4a" stroke-width="1.100" fill="none">
<path d="M981 141.3H1172.5"/>
<path d="M981 188.5H1172.5"/>
<path d="M981 235.7H1172.5"/>
<path d="M981 283.8H1172.5"/>
<path d="M981 141.3V283.8"/>
<path d="M1045 141.3V283.8"/>
<path d="M1109 141.3V283.8"/>
<path d="M1172.5 141.3V283.8"/>
</g>
<g font-size="6" fill="#222" font-weight="500">
<text x="984" y="184.3">名前</text>
<text x="1048" y="184.3">名前</text>
<text x="1112" y="184.3">名前</text>
<text x="984" y="231.5">名前</text>
<text x="1048" y="231.5">名前</text>
<text x="1112" y="231.5">名前</text>
<text x="984" y="279.6">名前</text>
<text x="1048" y="279.6">名前</text>
<text x="1112" y="279.6">名前</text>
</g><g stroke="#555" stroke-width=".9">
<path d="M982.5 185.3H1040"/>
<path d="M1046.5 185.3H1104"/>
<path d="M1110.5 185.3H1168"/>
<path d="M982.5 232.5H1040"/>
<path d="M1046.5 232.5H1104"/>
<path d="M1110.5 232.5H1168"/>
<path d="M982.5 280.6H1040"/>
<path d="M1046.5 280.6H1104"/>
<path d="M1110.5 280.6H1168"/>
</g>
<text x="1112" y="231.500" font-size="5.500" fill="#3a3a8a" font-weight="500" textLength="30">　　　よぴいちゃん</text>
<circle cx="995.3" cy="141.3" r="4.100" fill="#f5a21e"/>
<circle cx="1007.6" cy="141.3" r="4.100" fill="#2468e2"/>
<circle cx="1019.9" cy="141.3" r="4.100" fill="#f2f024"/>
<circle cx="1032.2" cy="141.3" r="4.100" fill="#8a22e0"/>
<circle cx="1059.3" cy="141.3" r="4.100" fill="#c05f62"/>
<circle cx="1071.6" cy="141.3" r="4.100" fill="#52b9cf"/>
<circle cx="1083.9" cy="141.3" r="4.100" fill="#c97a4b"/>
<circle cx="1096.2" cy="141.3" r="4.100" fill="#d871c2"/>
<circle cx="1123.3" cy="141.3" r="4.100" fill="#97f2c6"/>
<circle cx="1135.6" cy="141.3" r="4.100" fill="#8a9c22"/>
<circle cx="1147.9" cy="141.3" r="4.100" fill="#b3a6f2"/>
<circle cx="1160.2" cy="141.3" r="4.100" fill="#6262d6"/>
<circle cx="995.3" cy="188.5" r="4.100" fill="#e22424"/>
<circle cx="1007.6" cy="188.5" r="4.100" fill="#22c0f2"/>
<circle cx="1019.9" cy="188.5" r="4.100" fill="#42e024"/>
<circle cx="1032.2" cy="188.5" r="4.100" fill="#a22ee0"/>
<circle cx="1059.3" cy="188.5" r="4.100" fill="#62c862"/>
<circle cx="1071.6" cy="188.5" r="4.100" fill="#6284da"/>
<circle cx="1083.9" cy="188.5" r="4.100" fill="#b9d052"/>
<circle cx="1096.2" cy="188.5" r="4.100" fill="#b062d8"/>
<circle cx="1123.3" cy="188.5" r="4.100" fill="#52c2ea"/>
<circle cx="1135.6" cy="188.5" r="4.100" fill="#f2c2a2"/>
<circle cx="1147.9" cy="188.5" r="4.100" fill="#b4b434"/>
<circle cx="1160.2" cy="188.5" r="4.100" fill="#320a72"/>
<circle cx="995.3" cy="235.7" r="4.100" fill="#e2224e"/>
<circle cx="1007.6" cy="235.7" r="4.100" fill="#f27222"/>
<circle cx="1019.9" cy="235.7" r="4.100" fill="#e9f042"/>
<circle cx="1032.2" cy="235.7" r="4.100" fill="#22e2e0"/>
<circle cx="1059.3" cy="235.7" r="4.100" fill="#8272d8"/>
<circle cx="1071.6" cy="235.7" r="4.100" fill="#d08252"/>
<circle cx="1083.9" cy="235.7" r="4.100" fill="#72d892"/>
<circle cx="1096.2" cy="235.7" r="4.100" fill="#62d2ca"/>
<circle cx="1123.3" cy="235.7" r="4.100" fill="#72a8e2"/>
<circle cx="1135.6" cy="235.7" r="4.100" fill="#62a224"/>
<circle cx="1147.9" cy="235.7" r="4.100" fill="#b262ea"/>
<circle cx="1160.2" cy="235.7" r="4.100" fill="#e28a8a"/>
</g>
</svg></div>
    <div class="cell" style="left:280px;top:418px;width:137px;background:#fff"></div>
  </div>
</section>
<svg class="ink" width="1200" height="900" viewBox="0 0 1200 900">
<path d="M281 900L277 860 275.500 800 275 700 275 580Q275 548.500 301 547L360 546.500Q400 543.500 450 535.800L520 534.300 565 534.500Q586 535 598 539.500 611 545.500 621 552.500 630 560 630 580L630.500 700 634 757 881 756.500 881 640Q881 612 906 610L1000 608.500 1022 609 1023 596Q1024 572 1052 570.500L1200 568V900z" fill="#ff5c7b"/>
<path d="M613 227C630 201 660 186 693 183.500C724 181.500 744 191 753 203C768 222 775 248 773 272C771 300 765 318 757 331C742 352 715 362 688 363C655 363.500 630 358 613 347C595 333 583.500 310 583.500 285.500C584 262 596 246 613 227zM622 236C642 211 672 197.500 699 196.500C722 196.500 738 203 747 213C758 228 763 246 762.500 267C762 292 756 312 746.500 325C730 345 706 354 680 355C650 355.500 625 346 610 330C599 318 594.500 305 595 293C596 270 607 252 622 236z" fill="none" stroke="#ff5c7b" stroke-width="6" stroke-linecap="round" stroke-linejoin="round"/>
<path d="M690 364.500Q712 366.500 734 365" fill="none" stroke="#ff5c7b" stroke-width="3" stroke-linecap="round"/>
<path d="M386 345Q393 356 401 354.500T434 337.500" fill="none" stroke="#ff5c7b" stroke-width="4.500" stroke-linecap="round"/>
<text fill="#ff5c7b" stroke="#ff5c7b" stroke-linejoin="round" stroke-linecap="round"><tspan x="352.0" y="164.3" font-size="41.1" font-weight="500" stroke-width="1.5" textLength="40.0" lengthAdjust="spacingAndGlyphs">そ</tspan><tspan x="395.7" y="162.7" font-size="36.7" font-weight="700" stroke-width="1.5" textLength="25.6" lengthAdjust="spacingAndGlyphs">し</tspan><tspan x="416.7" y="161.5" font-size="38.9" font-weight="700" stroke-width="0.5" textLength="45.6" lengthAdjust="spacingAndGlyphs">た</tspan><tspan x="466.8" y="154.5" font-size="38.9" font-weight="700" stroke-width="1.5" textLength="23.3" lengthAdjust="spacingAndGlyphs">ら</tspan><tspan x="505.7" y="154.5" font-size="38.9" font-weight="700" stroke-width="1.3" textLength="26.7" lengthAdjust="spacingAndGlyphs">こ</tspan><tspan x="534.4" y="155.3" font-size="30.0" font-weight="900" stroke-width="0.6" textLength="32.2" lengthAdjust="spacingAndGlyphs">ん</tspan><tspan x="563.1" y="154.6" font-size="37.8" font-weight="700" stroke-width="0.7" textLength="38.9" lengthAdjust="spacingAndGlyphs">な</tspan><tspan x="603.7" y="155.0" font-size="33.3" font-weight="900" stroke-width="0.6" textLength="26.7" lengthAdjust="spacingAndGlyphs">ん</tspan><tspan x="626.8" y="154.8" font-size="35.6" font-weight="700" stroke-width="1.0" textLength="44.4" lengthAdjust="spacingAndGlyphs">が</tspan></text>
<text fill="#ff5c7b" stroke="#ff5c7b" stroke-linejoin="round" stroke-linecap="round"><tspan x="369.4" y="224.2" font-size="42.2" font-weight="500" stroke-width="1.0" textLength="31.1" lengthAdjust="spacingAndGlyphs">出</tspan><tspan x="400.8" y="218.4" font-size="28.9" font-weight="900" stroke-width="1.2" textLength="23.3" lengthAdjust="spacingAndGlyphs">て</tspan><tspan x="425.1" y="215.1" font-size="21.1" font-weight="900" stroke-width="1.7" textLength="17.8" lengthAdjust="spacingAndGlyphs">く</tspan><tspan x="453.9" y="214.6" font-size="37.8" font-weight="900" stroke-width="0.6" textLength="22.2" lengthAdjust="spacingAndGlyphs">る</tspan><tspan x="475.9" y="213.3" font-size="30.0" font-weight="900" stroke-width="1.3" textLength="21.1" lengthAdjust="spacingAndGlyphs">か</tspan><tspan x="498.3" y="213.9" font-size="34.4" font-weight="700" stroke-width="1.2" textLength="33.3" lengthAdjust="spacingAndGlyphs">ら</tspan></text>
<text fill="#ff5c7b" stroke="#ff5c7b" stroke-linejoin="round" stroke-linecap="round"><tspan x="363.1" y="283.2" font-size="42.2" font-weight="500" stroke-width="1.0" textLength="57.8" lengthAdjust="spacingAndGlyphs">使</tspan><tspan x="419.1" y="275.5" font-size="16.7" font-weight="900" stroke-width="1.7" textLength="18.9" lengthAdjust="spacingAndGlyphs">い</tspan><tspan x="434.9" y="269.8" font-size="35.6" font-weight="700" stroke-width="1.0" textLength="41.1" lengthAdjust="spacingAndGlyphs">た</tspan><tspan x="475.8" y="255.4" font-size="17.8" font-weight="900" stroke-width="1.7" textLength="23.3" lengthAdjust="spacingAndGlyphs">い</tspan></text>
<text fill="#ff5c7b" stroke="#ff5c7b" stroke-linejoin="round" stroke-linecap="round"><tspan x="385.8" y="336.1" font-size="43.3" font-weight="500" stroke-width="1.0" textLength="43.3" lengthAdjust="spacingAndGlyphs">画</tspan><tspan x="435.3" y="337.6" font-size="60.0" font-weight="400" stroke-width="1.0" textLength="54.4" lengthAdjust="spacingAndGlyphs">像</tspan><tspan x="483.2" y="322.5" font-size="38.9" font-weight="700" stroke-width="0.7" textLength="36.7" lengthAdjust="spacingAndGlyphs">を</tspan><tspan x="510.8" y="314.3" font-size="41.1" font-weight="500" stroke-width="1.0" textLength="43.3" lengthAdjust="spacingAndGlyphs">押</tspan><tspan x="551.9" y="316.5" font-size="50.0" font-weight="700" stroke-width="0.9" textLength="22.2" lengthAdjust="spacingAndGlyphs">す</tspan></text>
</svg>
</body>
</html>
